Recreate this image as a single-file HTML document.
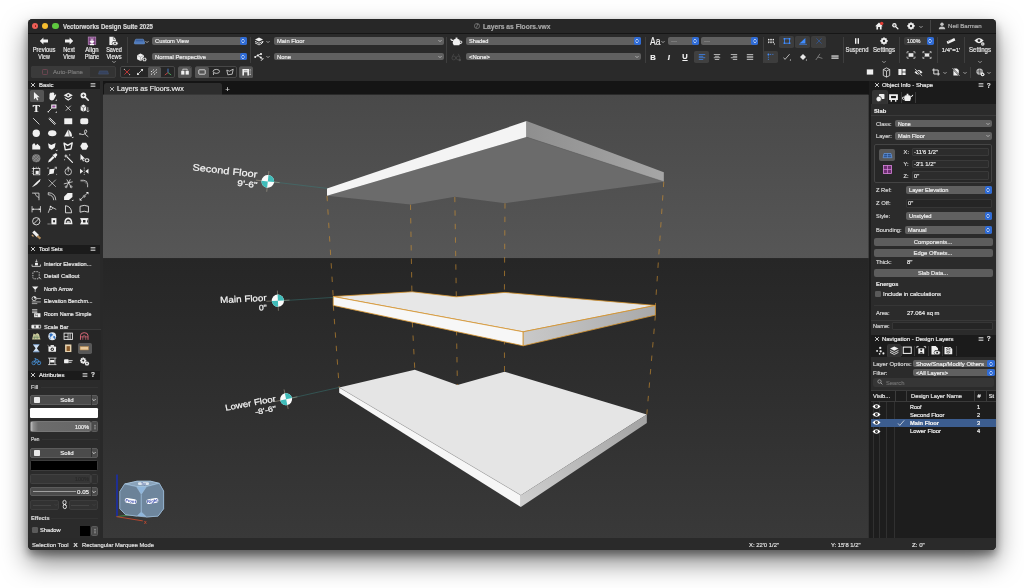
<!DOCTYPE html>
<html lang="en"><head><meta charset="utf-8"><title>Vectorworks Design Suite 2025 - Layers as Floors.vwx</title>
<style>
html,body{margin:0;padding:0;background:#fff;}
body{width:1024px;height:588px;overflow:hidden;position:relative;font-family:"Liberation Sans",sans-serif;}
#page{will-change:transform;position:absolute;left:0;top:0;width:1024px;height:588px;overflow:hidden;}
.a{position:absolute;box-sizing:border-box;}
.t{position:absolute;white-space:nowrap;-webkit-text-stroke:0.18px currentColor;}
svg{overflow:visible;}

</style></head>
<body>
<div id="page">
<div class="a" id="win" style="left:28.2px;top:19.2px;width:967.8px;height:531.3px;border-radius:4.5px;background:#2a2a2a;box-shadow:0 12px 26px rgba(0,0,0,.5),0 5px 9px rgba(0,0,0,.38);overflow:hidden;"></div>
<div class="a" id="winc" style="left:28.2px;top:19.2px;width:967.8px;height:531.3px;border-radius:4.5px;overflow:hidden;">
<div class="a" style="left:-28.2px;top:-19.2px;width:1024px;height:588px;">
<div class="a" style="left:28.00px;top:19.00px;width:968.00px;height:14.50px;background:#272727;"></div>
<div class="a" style="left:28.00px;top:33.30px;width:968.00px;height:0.70px;background:#161616;"></div>
<div class="a" style="left:28.00px;top:34.00px;width:968.00px;height:47.00px;background:#2a2a2a;"></div>
<div class="a" style="left:32.00px;top:23.00px;width:6.40px;height:6.40px;background:#ee5f57;border-radius:3.2px;"></div>
<div class="a" style="left:42.10px;top:23.00px;width:6.40px;height:6.40px;background:#f6be2f;border-radius:3.2px;"></div>
<div class="a" style="left:52.20px;top:23.00px;width:6.40px;height:6.40px;background:#5fc93f;border-radius:3.2px;"></div>
<div class="a" style="left:34.50px;top:25.40px;width:1.60px;height:1.60px;background:#8e1d13;border-radius:0.8px;"></div>
<span id="t1" class="t " style="top:22.96px;font-size:6.4px;line-height:7.68px;color:#dadada;font-weight:700;left:63.00px;transform-origin:0 50%;transform:scaleX(0.9525);">Vectorworks Design Suite 2025</span>
<span id="t2" class="t " style="top:22.96px;font-size:6.4px;line-height:7.68px;color:#a9a9a9;font-weight:700;left:482.50px;transform-origin:0 50%;transform:scaleX(1.0440);">Layers as Floors.vwx</span>
<span id="t3" class="t " style="top:22.08px;font-size:6.2px;line-height:7.44px;color:#b4b4b4;left:948.40px;transform-origin:0 50%;transform:scaleX(0.9869);">Neil Barman</span>
<svg class="a" style="left:39.30px;top:36.40px;" width="10" height="10" viewBox="-5.0 -5.0 10 10"><path d="M-4.2,0 L-0.6,-3.4 L-0.6,-1.4 L4,-1.4 L4,1.4 L-0.6,1.4 L-0.6,3.4 Z" fill="#f0f0f0"/></svg>
<svg class="a" style="left:64.10px;top:36.40px;" width="10" height="10" viewBox="-5.0 -5.0 10 10"><path d="M4.2,0 L0.6,-3.4 L0.6,-1.4 L-4,-1.4 L-4,1.4 L0.6,1.4 L0.6,3.4 Z" fill="#f0f0f0"/></svg>
<svg class="a" style="left:86.50px;top:36.20px;" width="10" height="10" viewBox="-5.0 -5.0 10 10"><rect x="-3.8" y="-4" width="7.6" height="7.6" fill="#7a3f7d" stroke="#c79acb" stroke-width="0.6"/><path d="M-1.2,-4 V3.6 M1.2,-4 V3.6" stroke="#c79acb" stroke-width="0.5"/><path d="M0,-2.4 V1 M-1.9,0.3 L0,2.6 L1.9,0.3 Z" stroke="#fff" stroke-width="1" fill="#fff"/><rect x="-2" y="3" width="4" height="1.2" fill="#fff"/></svg>
<svg class="a" style="left:108.30px;top:36.20px;" width="10" height="10" viewBox="-5.0 -5.0 10 10"><path d="M-3.6,-4.2 H0.6 L3,-1.8 V0 H-0.2 V4 H-3.6 Z" fill="#f0f0f0"/><path d="M0.4,-4 V-1.6 H2.8" fill="none" stroke="#2a2a2a" stroke-width="0.5"/><ellipse cx="2" cy="2.3" rx="3" ry="2" fill="#f0f0f0" stroke="#2a2a2a" stroke-width="0.5"/><circle cx="2" cy="2.3" r="0.9" fill="#2a2a2a"/></svg>
<span id="t4" class="t " style="top:45.90px;font-size:6.5px;line-height:7.80px;color:#ececec;left:44.30px;transform-origin:50% 50%;transform:translateX(-50%) scaleX(0.8934);">Previous</span>
<span id="t5" class="t " style="top:52.90px;font-size:6.5px;line-height:7.80px;color:#ececec;left:44.30px;transform-origin:50% 50%;transform:translateX(-50%) scaleX(0.8223);">View</span>
<span id="t6" class="t " style="top:45.90px;font-size:6.5px;line-height:7.80px;color:#ececec;left:69.10px;transform-origin:50% 50%;transform:translateX(-50%) scaleX(0.8673);">Next</span>
<span id="t7" class="t " style="top:52.90px;font-size:6.5px;line-height:7.80px;color:#ececec;left:69.10px;transform-origin:50% 50%;transform:translateX(-50%) scaleX(0.8223);">View</span>
<span id="t8" class="t " style="top:45.90px;font-size:6.5px;line-height:7.80px;color:#ececec;left:91.50px;transform-origin:50% 50%;transform:translateX(-50%) scaleX(0.9192);">Align</span>
<span id="t9" class="t " style="top:52.90px;font-size:6.5px;line-height:7.80px;color:#ececec;left:91.50px;transform-origin:50% 50%;transform:translateX(-50%) scaleX(0.8782);">Plane</span>
<span id="t10" class="t " style="top:45.90px;font-size:6.5px;line-height:7.80px;color:#ececec;left:113.50px;transform-origin:50% 50%;transform:translateX(-50%) scaleX(0.8461);">Saved</span>
<span id="t11" class="t " style="top:52.90px;font-size:6.5px;line-height:7.80px;color:#ececec;left:113.50px;transform-origin:50% 50%;transform:translateX(-50%) scaleX(0.8820);">Views</span>
<svg class="a" style="left:108.50px;top:57.20px;" width="10" height="10" viewBox="-5.0 -5.0 10 10"><path d="M-1.5,-0.75 L0,0.75 L1.5,-0.75" fill="none" stroke="#bdbdbd" stroke-width="0.7" stroke-linecap="round" stroke-linejoin="round"/></svg>
<div class="a" style="left:127.30px;top:37.00px;width:0.50px;height:26.00px;background:#3e3e3e;"></div>
<svg class="a" style="left:133.70px;top:35.90px;" width="11" height="11" viewBox="-5.5 -5.5 11 11"><path d="M-5.2,1.6 Q-5.4,2.4 -4.6,2.4 H4.6 Q5.4,2.4 5.2,1.6 L4.2,-1.6 Q4,-2.3 3.2,-2.3 H-3.2 Q-4,-2.3 -4.2,-1.6 Z" fill="#3b62a3" stroke="#79a7e6" stroke-width="0.55"/><path d="M-4.6,0.4 H4.6 M-4.9,1.4 H4.9" stroke="#79a7e6" stroke-width="0.4"/></svg>
<svg class="a" style="left:142.00px;top:36.80px;" width="10" height="10" viewBox="-5.0 -5.0 10 10"><path d="M-1.3,-0.65 L0,0.65 L1.3,-0.65" fill="none" stroke="#d8d8d8" stroke-width="0.7" stroke-linecap="round" stroke-linejoin="round"/></svg>
<svg class="a" style="left:135.90px;top:51.50px;" width="11" height="11" viewBox="-5.5 -5.5 11 11"><path d="M-4.4,-2.2 L-1,-4 L2.4,-2.2 V1.8 L-1,3.6 L-4.4,1.8 Z" fill="#f0f0f0"/><path d="M-4.4,-2.2 L-1,-0.4 L2.4,-2.2 M-1,-0.4 V3.6" stroke="#8a8a8a" stroke-width="0.5" fill="none"/><path d="M0.6,2 L1.8,0 H4.2 L5.4,2 L4.2,4 H1.8 Z" fill="#f0f0f0" stroke="#2a2a2a" stroke-width="0.6"/><circle cx="3" cy="2" r="0.9" fill="#2a2a2a"/></svg>
<div class="a" style="left:152.20px;top:37.30px;width:94.40px;height:7.70px;background:#606060;border-radius:2px;"></div>
<div class="a" style="left:239.50px;top:37.30px;width:7.10px;height:7.70px;background:#2f6bd5;border-radius:1.8px;"></div>
<svg class="a" style="left:238.05px;top:36.15px;" width="10" height="10" viewBox="-5.0 -5.0 10 10"><path d="M-1.2,-0.7 L0,-1.9 L1.2,-0.7 M-1.2,0.7 L0,1.9 L1.2,0.7" fill="none" stroke="#fff" stroke-width="0.7" stroke-linecap="round" stroke-linejoin="round"/></svg>
<span id="t12" class="t " style="top:37.08px;font-size:6.2px;line-height:7.44px;color:#f0f0f0;left:155.20px;transform-origin:0 50%;transform:scaleX(0.9355);">Custom View</span>
<div class="a" style="left:152.20px;top:52.80px;width:94.40px;height:7.70px;background:#606060;border-radius:2px;"></div>
<div class="a" style="left:239.50px;top:52.80px;width:7.10px;height:7.70px;background:#2f6bd5;border-radius:1.8px;"></div>
<svg class="a" style="left:238.05px;top:51.65px;" width="10" height="10" viewBox="-5.0 -5.0 10 10"><path d="M-1.2,-0.7 L0,-1.9 L1.2,-0.7 M-1.2,0.7 L0,1.9 L1.2,0.7" fill="none" stroke="#fff" stroke-width="0.7" stroke-linecap="round" stroke-linejoin="round"/></svg>
<span id="t13" class="t " style="top:53.08px;font-size:6.2px;line-height:7.44px;color:#f0f0f0;left:155.20px;transform-origin:0 50%;transform:scaleX(0.9444);">Normal Perspective</span>
<div class="a" style="left:250.00px;top:37.00px;width:0.50px;height:26.00px;background:#3e3e3e;"></div>
<svg class="a" style="left:253.60px;top:36.40px;" width="10" height="10" viewBox="-5.0 -5.0 10 10"><path d="M-4,-1.4 L0,-3.4 L4,-1.4 L0,0.6 Z" fill="#f0f0f0"/><path d="M-4,0.3 L0,2.3 L4,0.3 M-4,1.9 L0,3.9 L1.5,3.2" fill="none" stroke="#f0f0f0" stroke-width="0.8"/><path d="M1.8,3.4 L4.3,0.6" stroke="#f0f0f0" stroke-width="1"/></svg>
<svg class="a" style="left:263.30px;top:36.80px;" width="10" height="10" viewBox="-5.0 -5.0 10 10"><path d="M-1.3,-0.65 L0,0.65 L1.3,-0.65" fill="none" stroke="#cfcfcf" stroke-width="0.7" stroke-linecap="round" stroke-linejoin="round"/></svg>
<svg class="a" style="left:253.60px;top:51.60px;" width="10" height="10" viewBox="-5.0 -5.0 10 10"><path d="M-4,0 L-1.4,-1.6 M-1.4,-1.6 L1.6,-3 M-1.4,-1.6 L1.6,0.4 M1.6,0.4 L3.8,2.6" stroke="#f0f0f0" stroke-width="0.7" fill="none"/><circle cx="-3.8" cy="0" r="1" fill="#f0f0f0"/><circle cx="-1.2" cy="-1.6" r="1" fill="#f0f0f0"/><circle cx="2" cy="-3" r="1.1" fill="#f0f0f0"/><circle cx="1.8" cy="0.5" r="1.1" fill="#f0f0f0"/><path d="M2,3.8 L4.4,1" stroke="#f0f0f0" stroke-width="0.9"/></svg>
<svg class="a" style="left:263.30px;top:52.00px;" width="10" height="10" viewBox="-5.0 -5.0 10 10"><path d="M-1.3,-0.65 L0,0.65 L1.3,-0.65" fill="none" stroke="#cfcfcf" stroke-width="0.7" stroke-linecap="round" stroke-linejoin="round"/></svg>
<div class="a" style="left:273.80px;top:37.20px;width:170.40px;height:7.80px;background:#606060;border-radius:2px;"></div>
<svg class="a" style="left:435.20px;top:36.10px;" width="10" height="10" viewBox="-5.0 -5.0 10 10"><path d="M-1.3,-0.65 L0,0.65 L1.3,-0.65" fill="none" stroke="#d0d0d0" stroke-width="0.7" stroke-linecap="round" stroke-linejoin="round"/></svg>
<span id="t14" class="t " style="top:37.08px;font-size:6.2px;line-height:7.44px;color:#f0f0f0;left:276.80px;transform-origin:0 50%;transform:scaleX(0.9407);">Main Floor</span>
<div class="a" style="left:273.80px;top:52.70px;width:170.40px;height:7.80px;background:#606060;border-radius:2px;"></div>
<svg class="a" style="left:435.20px;top:51.60px;" width="10" height="10" viewBox="-5.0 -5.0 10 10"><path d="M-1.3,-0.65 L0,0.65 L1.3,-0.65" fill="none" stroke="#d0d0d0" stroke-width="0.7" stroke-linecap="round" stroke-linejoin="round"/></svg>
<span id="t15" class="t " style="top:53.08px;font-size:6.2px;line-height:7.44px;color:#f0f0f0;left:276.80px;transform-origin:0 50%;transform:scaleX(0.9461);">None</span>
<div class="a" style="left:446.40px;top:37.00px;width:0.50px;height:26.00px;background:#3e3e3e;"></div>
<svg class="a" style="left:451.10px;top:35.70px;" width="11" height="11" viewBox="-5.0 -5.0 10 10"><g transform="scale(-1.05,1.05)"><path d="M-2.6,-1.6 Q0,-3 2.6,-1.6 Q4,0.8 2.4,3.2 H-2.4 Q-4,0.8 -2.6,-1.6 Z" fill="#f0f0f0"/><rect x="-0.8" y="-3.4" width="1.6" height="1.2" fill="#f0f0f0"/><path d="M2.8,-0.8 Q5,-1 4.8,-2.4" stroke="#f0f0f0" stroke-width="0.9" fill="none"/><path d="M-3,-0.4 Q-5.2,-0.6 -4.6,1.2 Q-4,2 -3,1.8" stroke="#f0f0f0" stroke-width="0.8" fill="none"/></g></svg>
<svg class="a" style="left:451.00px;top:51.80px;" width="10" height="10" viewBox="-5.0 -5.0 10 10"><circle cx="-2.2" cy="1" r="1.9" fill="none" stroke="#4c4c4c" stroke-width="0.7"/><circle cx="2.2" cy="1" r="1.9" fill="none" stroke="#4c4c4c" stroke-width="0.7"/><path d="M-3.6,-0.4 L-2.2,-3.2 M3.6,-0.4 L2.2,-3.2 M-0.4,0.6 H0.4" stroke="#4c4c4c" stroke-width="0.7" fill="none"/><circle cx="3.8" cy="3" r="1.2" fill="#4c4c4c"/></svg>
<div class="a" style="left:466.20px;top:37.10px;width:174.60px;height:7.80px;background:#606060;border-radius:2px;"></div>
<div class="a" style="left:633.60px;top:37.10px;width:7.20px;height:7.80px;background:#2f6bd5;border-radius:1.8px;"></div>
<svg class="a" style="left:632.20px;top:36.00px;" width="10" height="10" viewBox="-5.0 -5.0 10 10"><path d="M-1.2,-0.7 L0,-1.9 L1.2,-0.7 M-1.2,0.7 L0,1.9 L1.2,0.7" fill="none" stroke="#fff" stroke-width="0.7" stroke-linecap="round" stroke-linejoin="round"/></svg>
<span id="t16" class="t " style="top:37.08px;font-size:6.2px;line-height:7.44px;color:#f0f0f0;left:469.20px;transform-origin:0 50%;transform:scaleX(0.9136);">Shaded</span>
<div class="a" style="left:466.20px;top:52.70px;width:174.60px;height:7.80px;background:#606060;border-radius:2px;"></div>
<svg class="a" style="left:631.80px;top:51.60px;" width="10" height="10" viewBox="-5.0 -5.0 10 10"><path d="M-1.3,-0.65 L0,0.65 L1.3,-0.65" fill="none" stroke="#d0d0d0" stroke-width="0.7" stroke-linecap="round" stroke-linejoin="round"/></svg>
<span id="t17" class="t " style="top:53.08px;font-size:6.2px;line-height:7.44px;color:#f0f0f0;left:469.20px;transform-origin:0 50%;transform:scaleX(0.9532);">&lt;None&gt;</span>
<div class="a" style="left:644.50px;top:37.00px;width:0.50px;height:26.00px;background:#3e3e3e;"></div>
<span id="t18" class="t " style="top:35.80px;font-size:10px;line-height:12.00px;color:#f0f0f0;left:649.60px;transform-origin:0 50%;transform:scaleX(0.8501);">Aa</span>
<svg class="a" style="left:657.60px;top:36.80px;" width="10" height="10" viewBox="-5.0 -5.0 10 10"><path d="M-1.3,-0.65 L0,0.65 L1.3,-0.65" fill="none" stroke="#cfcfcf" stroke-width="0.7" stroke-linecap="round" stroke-linejoin="round"/></svg>
<div class="a" style="left:668.00px;top:37.40px;width:30.60px;height:7.60px;background:#606060;border-radius:2px;"></div>
<div class="a" style="left:691.60px;top:37.40px;width:7.00px;height:7.60px;background:#2f6bd5;border-radius:1.8px;"></div>
<svg class="a" style="left:690.10px;top:36.20px;" width="10" height="10" viewBox="-5.0 -5.0 10 10"><path d="M-1.2,-0.7 L0,-1.9 L1.2,-0.7 M-1.2,0.7 L0,1.9 L1.2,0.7" fill="none" stroke="#fff" stroke-width="0.7" stroke-linecap="round" stroke-linejoin="round"/></svg>
<span id="t19" class="t " style="top:37.08px;font-size:6.2px;line-height:7.44px;color:#9a9a9a;left:671.00px;">---</span>
<div class="a" style="left:701.00px;top:37.40px;width:57.20px;height:7.60px;background:#606060;border-radius:2px;"></div>
<div class="a" style="left:751.20px;top:37.40px;width:7.00px;height:7.60px;background:#2f6bd5;border-radius:1.8px;"></div>
<svg class="a" style="left:749.70px;top:36.20px;" width="10" height="10" viewBox="-5.0 -5.0 10 10"><path d="M-1.2,-0.7 L0,-1.9 L1.2,-0.7 M-1.2,0.7 L0,1.9 L1.2,0.7" fill="none" stroke="#fff" stroke-width="0.7" stroke-linecap="round" stroke-linejoin="round"/></svg>
<span id="t20" class="t " style="top:37.08px;font-size:6.2px;line-height:7.44px;color:#9a9a9a;left:704.00px;">---</span>
<span id="t21" class="t " style="top:53.24px;font-size:7.6px;line-height:9.12px;color:#f2f2f2;font-weight:700;left:653.00px;transform-origin:50% 50%;transform:translateX(-50%);">B</span>
<span id="t22" class="t " style="top:53.24px;font-size:7.6px;line-height:9.12px;color:#f2f2f2;left:668.90px;transform-origin:50% 50%;transform:translateX(-50%);font-style:italic;font-weight:700;">I</span>
<span id="t23" class="t " style="top:53.36px;font-size:7.4px;line-height:8.88px;color:#f2f2f2;font-weight:700;left:685.00px;transform-origin:50% 50%;transform:translateX(-50%);text-decoration:underline;">U</span>
<div class="a" style="left:694.40px;top:51.30px;width:14.40px;height:11.60px;background:#404040;border-radius:1.8px;"></div>
<svg class="a" style="left:697.30px;top:52.00px;" width="10" height="10" viewBox="-5.0 -5.0 10 10"><rect x="-3.2" y="-2.75" width="6.4" height="0.7" fill="#3f8cff"/><rect x="-3.2" y="-1.15" width="4.4" height="0.7" fill="#3f8cff"/><rect x="-3.2" y="0.4500000000000003" width="6.4" height="0.7" fill="#3f8cff"/><rect x="-3.2" y="2.0500000000000007" width="4.4" height="0.7" fill="#3f8cff"/></svg>
<svg class="a" style="left:712.30px;top:52.00px;" width="10" height="10" viewBox="-5.0 -5.0 10 10"><rect x="-3.2" y="-2.75" width="6.4" height="0.7" fill="#e8e8e8"/><rect x="-2.2" y="-1.15" width="4.4" height="0.7" fill="#e8e8e8"/><rect x="-3.2" y="0.4500000000000003" width="6.4" height="0.7" fill="#e8e8e8"/><rect x="-2.2" y="2.0500000000000007" width="4.4" height="0.7" fill="#e8e8e8"/></svg>
<svg class="a" style="left:728.60px;top:52.00px;" width="10" height="10" viewBox="-5.0 -5.0 10 10"><rect x="-3.2" y="-2.75" width="6.4" height="0.7" fill="#e8e8e8"/><rect x="-1.2000000000000002" y="-1.15" width="4.4" height="0.7" fill="#e8e8e8"/><rect x="-3.2" y="0.4500000000000003" width="6.4" height="0.7" fill="#e8e8e8"/><rect x="-1.2000000000000002" y="2.0500000000000007" width="4.4" height="0.7" fill="#e8e8e8"/></svg>
<svg class="a" style="left:745.00px;top:52.00px;" width="10" height="10" viewBox="-5.0 -5.0 10 10"><rect x="-3.2" y="-2.75" width="6.4" height="0.7" fill="#e8e8e8"/><rect x="-3.2" y="-1.15" width="6.4" height="0.7" fill="#e8e8e8"/><rect x="-3.2" y="0.4500000000000003" width="6.4" height="0.7" fill="#e8e8e8"/><rect x="-3.2" y="2.0500000000000007" width="6.4" height="0.7" fill="#e8e8e8"/></svg>
<div class="a" style="left:762.50px;top:37.00px;width:0.50px;height:26.00px;background:#3e3e3e;"></div>
<svg class="a" style="left:765.50px;top:36.40px;" width="10" height="10" viewBox="-5.0 -5.0 10 10"><circle cx="-2.4" cy="-1.6" r="0.6" fill="#f4f4f4"/><circle cx="-2.4" cy="0.0" r="0.6" fill="#f4f4f4"/><circle cx="-2.4" cy="1.6" r="0.6" fill="#f4f4f4"/><circle cx="-0.7999999999999998" cy="-1.6" r="0.6" fill="#f4f4f4"/><circle cx="-0.7999999999999998" cy="0.0" r="0.6" fill="#f4f4f4"/><circle cx="-0.7999999999999998" cy="1.6" r="0.6" fill="#f4f4f4"/><circle cx="0.8000000000000003" cy="-1.6" r="0.6" fill="#f4f4f4"/><circle cx="0.8000000000000003" cy="0.0" r="0.6" fill="#f4f4f4"/><circle cx="0.8000000000000003" cy="1.6" r="0.6" fill="#f4f4f4"/><circle cx="2.400000000000001" cy="-1.6" r="0.6" fill="#f4f4f4"/><circle cx="2.400000000000001" cy="0.0" r="0.6" fill="#f4f4f4"/><circle cx="2.400000000000001" cy="1.6" r="0.6" fill="#f4f4f4"/><path d="M2.6,3.4 L4,2 V3.4 Z" fill="#e8e8e8"/></svg>
<div class="a" style="left:779.00px;top:36.10px;width:15.00px;height:11.60px;background:#3d3d3d;border-radius:1.8px;"></div>
<div class="a" style="left:795.00px;top:36.10px;width:15.00px;height:11.60px;background:#3d3d3d;border-radius:1.8px;"></div>
<div class="a" style="left:811.00px;top:36.10px;width:15.00px;height:11.60px;background:#3d3d3d;border-radius:1.8px;"></div>
<svg class="a" style="left:781.50px;top:36.30px;" width="10" height="10" viewBox="-5.0 -5.0 10 10"><rect x="-2.6" y="-2.2" width="5.2" height="4.4" fill="none" stroke="#3f8cff" stroke-width="0.8"/><rect x="-3.4" y="-3" width="1.6" height="1.6" fill="#3f8cff"/><rect x="1.8" y="-3" width="1.6" height="1.6" fill="#3f8cff"/><rect x="-3.4" y="1.4" width="1.6" height="1.6" fill="#3f8cff"/><rect x="1.8" y="1.4" width="1.6" height="1.6" fill="#3f8cff"/></svg>
<svg class="a" style="left:797.50px;top:36.30px;" width="10" height="10" viewBox="-5.0 -5.0 10 10"><path d="M-3.6,2.6 L2.4,-3 V2.6 Z" fill="#3f8cff"/><path d="M-3.8,3.4 H4" stroke="#3f8cff" stroke-width="0.6"/></svg>
<svg class="a" style="left:813.50px;top:36.30px;" width="10" height="10" viewBox="-5.0 -5.0 10 10"><path d="M-2.6,-2.6 L2.6,2.6 M2.6,-2.6 L-2.6,2.6" stroke="#2f5da8" stroke-width="0.7"/></svg>
<div class="a" style="left:763.00px;top:51.30px;width:15.00px;height:11.60px;background:#3d3d3d;border-radius:1.8px;"></div>
<svg class="a" style="left:765.50px;top:52.00px;" width="10" height="10" viewBox="-5.0 -5.0 10 10"><path d="M-2.6,3 V-2.6 H3" fill="none" stroke="#3f8cff" stroke-width="0.7" stroke-dasharray="1 0.8"/><circle cx="-2.6" cy="-2.6" r="0.9" fill="#3f8cff"/></svg>
<svg class="a" style="left:781.50px;top:52.00px;" width="10" height="10" viewBox="-5.0 -5.0 10 10"><path d="M-3.4,0.6 L-2,2.4 L2.6,-2.8" fill="none" stroke="#d8d8d8" stroke-width="0.8"/><path d="M2.6,3.4 L4,2 V3.4 Z" fill="#d8d8d8"/></svg>
<svg class="a" style="left:797.50px;top:52.00px;" width="10" height="10" viewBox="-5.0 -5.0 10 10"><path d="M-3,0 L0,-3 L3,0 L0,3 Z" fill="#e8e8e8"/><path d="M2.6,3.4 L4,2 V3.4 Z" fill="#d8d8d8"/></svg>
<svg class="a" style="left:813.50px;top:52.00px;" width="10" height="10" viewBox="-5.0 -5.0 10 10"><path d="M-3.2,3 L1,-3.2 M-1,0 L3.4,1.4" stroke="#9a9a9a" stroke-width="0.7"/></svg>
<svg class="a" style="left:829.50px;top:52.20px;" width="10" height="10" viewBox="-5.0 -5.0 10 10"><rect x="-3.6" y="-1.6" width="7.2" height="1.3" fill="#d8d8d8"/><rect x="-3.6" y="0.5" width="7.2" height="1.3" fill="#d8d8d8"/></svg>
<div class="a" style="left:843.00px;top:37.00px;width:0.50px;height:26.00px;background:#3e3e3e;"></div>
<svg class="a" style="left:851.50px;top:36.30px;" width="10" height="10" viewBox="-5.0 -5.0 10 10"><rect x="-2" y="-2.8" width="1.4" height="5.6" fill="#f0f0f0"/><rect x="0.6" y="-2.8" width="1.4" height="5.6" fill="#f0f0f0"/></svg>
<span id="t24" class="t " style="top:45.96px;font-size:6.4px;line-height:7.68px;color:#e8e8e8;left:856.50px;transform-origin:50% 50%;transform:translateX(-50%) scaleX(0.9115);">Suspend</span>
<svg class="a" style="left:878.50px;top:36.20px;" width="10" height="10" viewBox="-5.0 -5.0 10 10"><g transform="translate(0,0)"><circle r="2.48" fill="#f0f0f0"/><rect x="-0.93" y="-3.53" width="1.86" height="1.86" rx="0.19" fill="#f0f0f0" transform="rotate(0)"/><rect x="-0.93" y="-3.53" width="1.86" height="1.86" rx="0.19" fill="#f0f0f0" transform="rotate(45)"/><rect x="-0.93" y="-3.53" width="1.86" height="1.86" rx="0.19" fill="#f0f0f0" transform="rotate(90)"/><rect x="-0.93" y="-3.53" width="1.86" height="1.86" rx="0.19" fill="#f0f0f0" transform="rotate(135)"/><rect x="-0.93" y="-3.53" width="1.86" height="1.86" rx="0.19" fill="#f0f0f0" transform="rotate(180)"/><rect x="-0.93" y="-3.53" width="1.86" height="1.86" rx="0.19" fill="#f0f0f0" transform="rotate(225)"/><rect x="-0.93" y="-3.53" width="1.86" height="1.86" rx="0.19" fill="#f0f0f0" transform="rotate(270)"/><rect x="-0.93" y="-3.53" width="1.86" height="1.86" rx="0.19" fill="#f0f0f0" transform="rotate(315)"/><circle r="1.18" fill="#2a2a2a"/></g></svg>
<span id="t25" class="t " style="top:45.96px;font-size:6.4px;line-height:7.68px;color:#e8e8e8;left:883.50px;transform-origin:50% 50%;transform:translateX(-50%) scaleX(0.9526);">Settings</span>
<svg class="a" style="left:878.50px;top:57.20px;" width="10" height="10" viewBox="-5.0 -5.0 10 10"><path d="M-1.5,-0.75 L0,0.75 L1.5,-0.75" fill="none" stroke="#bdbdbd" stroke-width="0.7" stroke-linecap="round" stroke-linejoin="round"/></svg>
<div class="a" style="left:899.00px;top:37.00px;width:0.50px;height:26.00px;background:#3e3e3e;"></div>
<div class="a" style="left:903.50px;top:37.00px;width:30.30px;height:7.80px;background:#3c3c3c;border-radius:2px;"></div>
<div class="a" style="left:926.60px;top:37.00px;width:7.20px;height:7.80px;background:#2f6bd5;border-radius:1.8px;"></div>
<svg class="a" style="left:925.20px;top:35.90px;" width="10" height="10" viewBox="-5.0 -5.0 10 10"><path d="M-1.2,-0.7 L0,-1.9 L1.2,-0.7 M-1.2,0.7 L0,1.9 L1.2,0.7" fill="none" stroke="#fff" stroke-width="0.7" stroke-linecap="round" stroke-linejoin="round"/></svg>
<span id="t26" class="t " style="top:37.08px;font-size:6.2px;line-height:7.44px;color:#f0f0f0;left:906.90px;transform-origin:0 50%;transform:scaleX(0.8529);">100%</span>
<svg class="a" style="left:905.50px;top:50.20px;" width="10" height="10" viewBox="-5.0 -5.0 10 10"><rect x="-2.4" y="-1.8" width="4.8" height="3.6" fill="#e8e8e8"/><path d="M-4,-1.6 V-3.2 H-2.2 M4,-1.6 V-3.2 H2.2 M-4,1.6 V3.2 H-2.2 M4,1.6 V3.2 H2.2" fill="none" stroke="#e8e8e8" stroke-width="0.7"/></svg>
<svg class="a" style="left:921.50px;top:50.20px;" width="10" height="10" viewBox="-5.0 -5.0 10 10"><rect x="-2.2" y="-1.6" width="4.4" height="3.2" fill="#e8e8e8"/><path d="M-4,-3.2 L-2.4,-1.8 M4,-3.2 L2.4,-1.8 M-4,3.2 L-2.4,1.8 M4,3.2 L2.4,1.8 M-4.2,-1.8 V-3.4 H-2.6 M4.2,-1.8 V-3.4 H2.6 M-4.2,1.8 V3.4 H-2.6 M4.2,1.8 V3.4 H2.6" fill="none" stroke="#e8e8e8" stroke-width="0.6"/></svg>
<div class="a" style="left:937.20px;top:37.00px;width:0.50px;height:26.00px;background:#3e3e3e;"></div>
<svg class="a" style="left:946.00px;top:36.20px;" width="10" height="10" viewBox="-5.0 -5.0 10 10"><rect x="-4.2" y="-1.3" width="8.4" height="2.6" fill="#f0f0f0" transform="rotate(-24)"/><path d="M-2.4,0.2 V-1 M-0.8,-0.5 V-1.7 M0.8,-1.2 V-2.4" stroke="#2a2a2a" stroke-width="0.5" transform="rotate(-24)"/></svg>
<span id="t27" class="t " style="top:46.70px;font-size:6.0px;line-height:7.20px;color:#e8e8e8;left:951.00px;transform-origin:50% 50%;transform:translateX(-50%) scaleX(1.0017);">1/4"=1'</span>
<div class="a" style="left:964.00px;top:37.00px;width:0.50px;height:26.00px;background:#3e3e3e;"></div>
<svg class="a" style="left:974.00px;top:35.80px;" width="10" height="10" viewBox="-5.0 -5.0 10 10"><path d="M-4.6,-0.4 Q0,-5.6 4.6,-0.4 Q0,4.8 -4.6,-0.4 Z" fill="#f0f0f0"/><circle cx="0" cy="-0.4" r="1.35" fill="#2a2a2a"/><g transform="translate(3.8,3)"><circle r="1.20" fill="#f0f0f0"/><rect x="-0.45" y="-1.71" width="0.90" height="0.90" rx="0.09" fill="#f0f0f0" transform="rotate(0)"/><rect x="-0.45" y="-1.71" width="0.90" height="0.90" rx="0.09" fill="#f0f0f0" transform="rotate(45)"/><rect x="-0.45" y="-1.71" width="0.90" height="0.90" rx="0.09" fill="#f0f0f0" transform="rotate(90)"/><rect x="-0.45" y="-1.71" width="0.90" height="0.90" rx="0.09" fill="#f0f0f0" transform="rotate(135)"/><rect x="-0.45" y="-1.71" width="0.90" height="0.90" rx="0.09" fill="#f0f0f0" transform="rotate(180)"/><rect x="-0.45" y="-1.71" width="0.90" height="0.90" rx="0.09" fill="#f0f0f0" transform="rotate(225)"/><rect x="-0.45" y="-1.71" width="0.90" height="0.90" rx="0.09" fill="#f0f0f0" transform="rotate(270)"/><rect x="-0.45" y="-1.71" width="0.90" height="0.90" rx="0.09" fill="#f0f0f0" transform="rotate(315)"/><circle r="0.57" fill="#2a2a2a"/></g></svg>
<span id="t28" class="t " style="top:45.96px;font-size:6.4px;line-height:7.68px;color:#e8e8e8;left:979.50px;transform-origin:50% 50%;transform:translateX(-50%) scaleX(0.9526);">Settings</span>
<svg class="a" style="left:974.50px;top:57.20px;" width="10" height="10" viewBox="-5.0 -5.0 10 10"><path d="M-1.5,-0.75 L0,0.75 L1.5,-0.75" fill="none" stroke="#bdbdbd" stroke-width="0.7" stroke-linecap="round" stroke-linejoin="round"/></svg>
<svg class="a" style="left:873.80px;top:21.20px;" width="10" height="10" viewBox="-5.0 -5.0 10 10"><path d="M-3.8,0.2 L0,-3.4 L3.8,0.2 H2.6 V3.4 H0.9 V1 H-0.9 V3.4 H-2.6 V0.2 Z" fill="#f0f0f0"/><circle cx="2.7" cy="-2.6" r="1.7" fill="#e33d35"/></svg>
<svg class="a" style="left:890.00px;top:21.30px;" width="10" height="10" viewBox="-5.0 -5.0 10 10"><circle cx="-0.6" cy="-0.7" r="2.2" fill="#f0f0f0"/><circle cx="-0.6" cy="-0.7" r="1.1" fill="#6a6a6a"/><path d="M1,0.9 L2.9,2.8" stroke="#f0f0f0" stroke-width="1.3" stroke-linecap="round"/></svg>
<svg class="a" style="left:905.80px;top:21.20px;" width="10" height="10" viewBox="-5.0 -5.0 10 10"><g transform="translate(0,0)"><circle r="2.48" fill="#f0f0f0"/><rect x="-0.93" y="-3.53" width="1.86" height="1.86" rx="0.19" fill="#f0f0f0" transform="rotate(0)"/><rect x="-0.93" y="-3.53" width="1.86" height="1.86" rx="0.19" fill="#f0f0f0" transform="rotate(45)"/><rect x="-0.93" y="-3.53" width="1.86" height="1.86" rx="0.19" fill="#f0f0f0" transform="rotate(90)"/><rect x="-0.93" y="-3.53" width="1.86" height="1.86" rx="0.19" fill="#f0f0f0" transform="rotate(135)"/><rect x="-0.93" y="-3.53" width="1.86" height="1.86" rx="0.19" fill="#f0f0f0" transform="rotate(180)"/><rect x="-0.93" y="-3.53" width="1.86" height="1.86" rx="0.19" fill="#f0f0f0" transform="rotate(225)"/><rect x="-0.93" y="-3.53" width="1.86" height="1.86" rx="0.19" fill="#f0f0f0" transform="rotate(270)"/><rect x="-0.93" y="-3.53" width="1.86" height="1.86" rx="0.19" fill="#f0f0f0" transform="rotate(315)"/><circle r="1.18" fill="#272727"/></g></svg>
<svg class="a" style="left:915.80px;top:21.60px;" width="10" height="10" viewBox="-5.0 -5.0 10 10"><path d="M-1.3,-0.65 L0,0.65 L1.3,-0.65" fill="none" stroke="#cfcfcf" stroke-width="0.7" stroke-linecap="round" stroke-linejoin="round"/></svg>
<div class="a" style="left:930.40px;top:19.50px;width:0.60px;height:13.80px;background:#444;"></div>
<svg class="a" style="left:937.20px;top:21.00px;" width="10" height="10" viewBox="-5.0 -5.0 10 10"><circle cx="0" cy="-1.7" r="1.7" fill="#c4c4c4"/><path d="M-3.2,3.2 Q-3.2,0.5 0,0.5 Q3.2,0.5 3.2,3.2 Z" fill="#c4c4c4"/></svg>
<svg class="a" style="left:471.80px;top:21.20px;" width="10" height="10" viewBox="-5.0 -5.0 10 10"><circle r="2.6" fill="none" stroke="#8a8a8a" stroke-width="0.6"/><path d="M-1,2 L1,-2 M-0.4,-1.6 H1.4" stroke="#8a8a8a" stroke-width="0.6" fill="none"/></svg>
<div class="a" style="left:31.00px;top:66.40px;width:85.30px;height:11.60px;background:#333333;border-radius:2px;border:0.5px solid #3d3d3d;"></div>
<div class="a" style="left:31.00px;top:66.40px;width:58.60px;height:11.60px;background:#3a3a3a;border-radius:2px 0 0 2px;"></div>
<div class="a" style="left:42.00px;top:69.00px;width:6.40px;height:6.40px;border-radius:1.2px;border:0.6px solid #6a4550;"></div>
<span id="t29" class="t " style="top:68.08px;font-size:6.2px;line-height:7.44px;color:#7a7a7a;left:53.00px;transform-origin:0 50%;transform:scaleX(0.9768);">Auto-Plane</span>
<svg class="a" style="left:97.80px;top:67.10px;" width="11" height="11" viewBox="-5.5 -5.5 11 11"><path d="M-5,1.6 L-4,-1.6 H4 L5,1.6 Z" fill="#36425c" stroke="#47587a" stroke-width="0.5"/></svg>
<div class="a" style="left:119.60px;top:66.20px;width:55.40px;height:11.60px;background:#262626;border-radius:2px;border:0.5px solid #474747;"></div>
<div class="a" style="left:147.60px;top:66.50px;width:13.25px;height:11.00px;background:#555555;border-radius:1.5px;"></div>
<svg class="a" style="left:121.52px;top:67.10px;" width="10" height="10" viewBox="-5.0 -5.0 10 10"><path d="M-2.6,-2.6 L2.6,2.6 M2.6,-2.6 L-2.6,2.6" stroke="#d83a3a" stroke-width="0.8"/><circle cx="-2.6" cy="-2.6" r="0.6" fill="#bbb"/><circle cx="2.6" cy="2.6" r="0.6" fill="#bbb"/></svg>
<svg class="a" style="left:135.38px;top:67.10px;" width="10" height="10" viewBox="-5.0 -5.0 10 10"><path d="M-2.4,2.4 L2.4,-2.4" stroke="#e8e8e8" stroke-width="0.8"/><path d="M0.6,-3 H3 V-0.6 Z M-0.6,3 H-3 V0.6 Z" fill="#e8e8e8"/></svg>
<svg class="a" style="left:149.22px;top:67.10px;" width="10" height="10" viewBox="-5.0 -5.0 10 10"><path d="M-3,2.6 L3,-2.6 M-3,0 L0,-2.6 M0,2.6 L3,0" stroke="#f0f0f0" stroke-width="1" stroke-dasharray="1.3 1"/></svg>
<svg class="a" style="left:163.07px;top:67.10px;" width="10" height="10" viewBox="-5.0 -5.0 10 10"><path d="M0,0.6 V-3.4" stroke="#4f8df0" stroke-width="0.8"/><path d="M0,0.6 L-3.2,3" stroke="#e04a4a" stroke-width="0.8"/><path d="M0,0.6 L3.2,3" stroke="#4fc06a" stroke-width="0.8"/></svg>
<div class="a" style="left:177.60px;top:66.20px;width:14.20px;height:11.60px;background:#262626;border-radius:2px;border:0.5px solid #474747;"></div>
<div class="a" style="left:177.90px;top:66.50px;width:13.60px;height:11.00px;background:#555555;border-radius:1.5px;"></div>
<svg class="a" style="left:179.70px;top:67.40px;" width="10" height="10" viewBox="-5.0 -5.0 10 10"><rect x="-3.8" y="-1.2" width="3.2" height="3.8" fill="#f0f0f0"/><rect x="0.6" y="-1.2" width="3.2" height="3.8" fill="#f0f0f0"/><path d="M-2.2,-1.4 V-2.8 H2.2 V-1.4" fill="none" stroke="#f0f0f0" stroke-width="0.7"/></svg>
<div class="a" style="left:195.00px;top:66.20px;width:41.80px;height:11.60px;background:#262626;border-radius:2px;border:0.5px solid #474747;"></div>
<div class="a" style="left:195.30px;top:66.50px;width:13.33px;height:11.00px;background:#555555;border-radius:1.5px;"></div>
<svg class="a" style="left:196.97px;top:67.10px;" width="10" height="10" viewBox="-5.0 -5.0 10 10"><rect x="-3.2" y="-2.2" width="6.4" height="4.4" rx="0.6" fill="none" stroke="#f0f0f0" stroke-width="0.8"/></svg>
<svg class="a" style="left:210.90px;top:67.10px;" width="10" height="10" viewBox="-5.0 -5.0 10 10"><ellipse cx="0.3" cy="-0.6" rx="3.2" ry="2" fill="none" stroke="#f0f0f0" stroke-width="0.7"/><path d="M-2.2,0.8 Q-3.4,2 -2.2,3" fill="none" stroke="#f0f0f0" stroke-width="0.7"/></svg>
<svg class="a" style="left:224.83px;top:67.10px;" width="10" height="10" viewBox="-5.0 -5.0 10 10"><path d="M-3.2,-2 L-0.6,-0.8 L3.2,-2.8 L2.2,2.2 L-2.2,2.8 Z" fill="none" stroke="#f0f0f0" stroke-width="0.7" stroke-linejoin="round"/></svg>
<div class="a" style="left:238.80px;top:66.20px;width:14.20px;height:11.60px;background:#262626;border-radius:2px;border:0.5px solid #474747;"></div>
<div class="a" style="left:239.10px;top:66.50px;width:13.60px;height:11.00px;background:#555555;border-radius:1.5px;"></div>
<svg class="a" style="left:240.90px;top:67.30px;" width="10" height="10" viewBox="-5.0 -5.0 10 10"><path d="M-3.6,3.4 V-3 H3 V3.4 H1.4 V0.2 H-2 V3.4 Z" fill="#f0f0f0"/><path d="M-2,-1.2 H1.4" stroke="#555" stroke-width="0.6"/><path d="M4.2,-2.4 V2.8 M3.6,-1.6 L4.2,-2.6 L4.8,-1.6 M3.6,2 L4.2,3 L4.8,2" stroke="#f0f0f0" stroke-width="0.4" fill="none"/></svg>
<svg class="a" style="left:865.00px;top:67.20px;" width="10" height="10" viewBox="-5.0 -5.0 10 10"><rect x="-3.2" y="-2.6" width="6.4" height="5.2" fill="#f0f0f0"/></svg>
<svg class="a" style="left:880.90px;top:66.70px;" width="11" height="11" viewBox="-5.5 -5.5 11 11"><path d="M-3.2,-3 L0,-4.6 L3.2,-3 V3 L0,4.6 L-3.2,3 Z M-3.2,-3 L0,-1.4 L3.2,-3 M0,-1.4 V4.6" fill="none" stroke="#f0f0f0" stroke-width="0.75" stroke-linejoin="round"/></svg>
<svg class="a" style="left:896.50px;top:67.20px;" width="10" height="10" viewBox="-5.0 -5.0 10 10"><rect x="-3.6" y="-3" width="3.2" height="6" fill="#f0f0f0"/><rect x="0.4" y="-3" width="3.2" height="2.6" fill="#f0f0f0"/><rect x="0.4" y="0.4" width="3.2" height="2.6" fill="#f0f0f0"/></svg>
<svg class="a" style="left:913.10px;top:66.70px;" width="11" height="11" viewBox="-5.5 -5.5 11 11"><path d="M-4,-0.2 Q0,-4.6 4,-0.2 Q0,4.2 -4,-0.2 Z" fill="#f0f0f0"/><circle cy="-0.2" r="1.3" fill="#2a2a2a"/><path d="M-3.6,-3.6 L3.6,3.4" stroke="#2a2a2a" stroke-width="1.5"/><path d="M-3.6,-3.6 L3.6,3.4" stroke="#f0f0f0" stroke-width="0.7"/></svg>
<svg class="a" style="left:931.00px;top:67.20px;" width="10" height="10" viewBox="-5.0 -5.0 10 10"><path d="M-2.2,-3.6 V2 H3.8 M-3.8,-2 H2.2 V3.6" fill="none" stroke="#f0f0f0" stroke-width="0.9"/></svg>
<svg class="a" style="left:940.00px;top:67.80px;" width="10" height="10" viewBox="-5.0 -5.0 10 10"><path d="M-1.3,-0.65 L0,0.65 L1.3,-0.65" fill="none" stroke="#cfcfcf" stroke-width="0.7" stroke-linecap="round" stroke-linejoin="round"/></svg>
<svg class="a" style="left:951.00px;top:67.20px;" width="10" height="10" viewBox="-5.0 -5.0 10 10"><path d="M-2.6,-3.6 H1 L2.8,-1.8 V3.6 H-2.6 Z" fill="#f0f0f0"/><path d="M-3.6,-3.8 L3.6,3.8" stroke="#2a2a2a" stroke-width="1.3"/><path d="M-3.6,-3.8 L3.6,3.8" stroke="#f0f0f0" stroke-width="0.6"/></svg>
<svg class="a" style="left:960.00px;top:67.80px;" width="10" height="10" viewBox="-5.0 -5.0 10 10"><path d="M-1.3,-0.65 L0,0.65 L1.3,-0.65" fill="none" stroke="#cfcfcf" stroke-width="0.7" stroke-linecap="round" stroke-linejoin="round"/></svg>
<div class="a" style="left:970.30px;top:67.00px;width:0.50px;height:11.00px;background:#3e3e3e;"></div>
<svg class="a" style="left:975.40px;top:67.00px;" width="10" height="10" viewBox="-5.0 -5.0 10 10"><circle cx="-0.4" cy="-0.4" r="3.2" fill="#cfcfcf"/><path d="M-3.4,-0.6 H2.6 M-0.4,-3.6 V2.8 M-2.8,-2 Q-0.4,-0.8 2,-2 M-2.8,1.2 Q-0.4,0 2,1.2" stroke="#2a2a2a" stroke-width="0.45" fill="none"/><g transform="translate(2.6,2.4)"><circle r="1.36" fill="#f0f0f0"/><rect x="-0.51" y="-1.94" width="1.02" height="1.02" rx="0.10" fill="#f0f0f0" transform="rotate(0)"/><rect x="-0.51" y="-1.94" width="1.02" height="1.02" rx="0.10" fill="#f0f0f0" transform="rotate(45)"/><rect x="-0.51" y="-1.94" width="1.02" height="1.02" rx="0.10" fill="#f0f0f0" transform="rotate(90)"/><rect x="-0.51" y="-1.94" width="1.02" height="1.02" rx="0.10" fill="#f0f0f0" transform="rotate(135)"/><rect x="-0.51" y="-1.94" width="1.02" height="1.02" rx="0.10" fill="#f0f0f0" transform="rotate(180)"/><rect x="-0.51" y="-1.94" width="1.02" height="1.02" rx="0.10" fill="#f0f0f0" transform="rotate(225)"/><rect x="-0.51" y="-1.94" width="1.02" height="1.02" rx="0.10" fill="#f0f0f0" transform="rotate(270)"/><rect x="-0.51" y="-1.94" width="1.02" height="1.02" rx="0.10" fill="#f0f0f0" transform="rotate(315)"/><circle r="0.65" fill="#2a2a2a"/></g></svg>
<svg class="a" style="left:984.20px;top:67.80px;" width="10" height="10" viewBox="-5.0 -5.0 10 10"><path d="M-1.3,-0.65 L0,0.65 L1.3,-0.65" fill="none" stroke="#cfcfcf" stroke-width="0.7" stroke-linecap="round" stroke-linejoin="round"/></svg>
<div class="a" style="left:28.00px;top:81.00px;width:72.20px;height:457.00px;background:#2b2b2b;"></div>
<div class="a" style="left:100.20px;top:81.00px;width:2.80px;height:457.00px;background:#292929;"></div>
<div class="a" style="left:28.00px;top:80.90px;width:72.20px;height:8.60px;background:#1b1b1b;"></div>
<svg class="a" style="left:28.20px;top:80.20px;" width="10" height="10" viewBox="-5.0 -5.0 10 10"><path d="M-1.9,-1.9 L1.9,1.9 M1.9,-1.9 L-1.9,1.9" stroke="#f0f0f0" stroke-width="0.85"/></svg>
<span id="t30" class="t " style="top:81.14px;font-size:6.1px;line-height:7.32px;color:#f0f0f0;left:39.00px;transform-origin:0 50%;transform:scaleX(0.9727);">Basic</span>
<svg class="a" style="left:88.00px;top:80.20px;" width="10" height="10" viewBox="-5.0 -5.0 10 10"><path d="M-2.4,-1.5 H2.4 M-2.4,0 H2.4 M-2.4,1.5 H2.4" stroke="#d8d8d8" stroke-width="0.75"/></svg>
<div class="a" style="left:29.60px;top:89.80px;width:14.00px;height:11.80px;background:#555555;border-radius:1.5px;"></div>
<svg class="a" style="left:31.05px;top:90.55px;" width="10.5" height="10.5" viewBox="-5.0 -5.0 10 10"><path d="M-2.2,-4 L-2.2,3 L-0.4,1.4 L0.8,4 L2,3.4 L0.8,0.9 L3.2,0.9 Z" fill="#f0f0f0"/></svg>
<svg class="a" style="left:47.15px;top:90.55px;" width="10.5" height="10.5" viewBox="-5.0 -5.0 10 10"><path d="M-2.6,0.6 V-2 Q-2.6,-2.8 -1.9,-2.8 V-3.2 Q-1.4,-4 -0.7,-3.2 Q-0.2,-4.4 0.6,-3.4 Q1.4,-4 1.9,-3 V-0.6 L3.2,-1.8 Q4.2,-1.6 3.6,-0.6 L1.6,3 Q0.8,4 -0.6,4 Q-2.6,4 -2.8,2 Z" fill="#f0f0f0"/><path d="M2.8,4.4 L4.4,2.8 V4.4 Z" fill="#f0f0f0"/></svg>
<svg class="a" style="left:63.15px;top:90.55px;" width="10.5" height="10.5" viewBox="-5.0 -5.0 10 10"><path d="M-4.4,-1 L0,-3.4 L4.4,-1 L0,1.4 Z" fill="#f0f0f0"/><path d="M-3.6,0.8 L0,2.8 L3.6,0.8 L3,2.2 L0,4.2 L-3,2.2 Z" fill="#f0f0f0"/><circle cx="0" cy="-1" r="1" fill="#2b2b2b"/></svg>
<svg class="a" style="left:79.35px;top:90.55px;" width="10.5" height="10.5" viewBox="-5.0 -5.0 10 10"><circle cx="-0.8" cy="-0.8" r="2.7" fill="#f0f0f0"/><path d="M1.2,1.2 L3.8,3.8" stroke="#f0f0f0" stroke-width="1.5" stroke-linecap="round"/><path d="M-2.2,-0.8 H0.6 M-0.8,-2.2 V0.6" stroke="#2b2b2b" stroke-width="0.7"/></svg>
<span id="t31" class="t " style="top:103.00px;font-size:10.5px;line-height:12.60px;color:#f0f0f0;font-weight:700;left:36.30px;transform-origin:50% 50%;transform:translateX(-50%);font-family:'Liberation Serif',serif;">T</span>
<svg class="a" style="left:47.15px;top:103.10px;" width="10.5" height="10.5" viewBox="-5.0 -5.0 10 10"><rect x="-1" y="-3.6" width="5" height="3.8" fill="#f0f0f0"/><rect x="0" y="-2.6" width="3" height="1.8" fill="#9a4fa0"/><path d="M-3.8,3.4 L-0.6,0" stroke="#f0f0f0" stroke-width="0.8"/><circle cx="-3.8" cy="3.4" r="0.7" fill="#f0f0f0"/><path d="M2.8,4.4 L4.4,2.8 V4.4 Z" fill="#f0f0f0"/></svg>
<svg class="a" style="left:63.15px;top:103.10px;" width="10.5" height="10.5" viewBox="-5.0 -5.0 10 10"><path d="M-2.4,-2.4 L2.4,2.4 M2.4,-2.4 L-2.4,2.4" stroke="#f0f0f0" stroke-width="0.7"/></svg>
<svg class="a" style="left:79.35px;top:103.10px;" width="10.5" height="10.5" viewBox="-5.0 -5.0 10 10"><path d="M-3.4,-2 L-0.8,-3.6 L1.8,-2 V1.8 L-0.8,3.4 L-3.4,1.8 Z" fill="#f0f0f0"/><path d="M-3.4,-2 L-0.8,-0.4 L1.8,-2 M-0.8,-0.4 V3.4" stroke="#2b2b2b" stroke-width="0.5" fill="none"/><path d="M3.4,-1 V3.4 M2.2,2.2 L3.4,3.6 L4.6,2.2" stroke="#f0f0f0" stroke-width="0.6" fill="none"/></svg>
<svg class="a" style="left:31.05px;top:115.65px;" width="10.5" height="10.5" viewBox="-5.0 -5.0 10 10"><path d="M-3,-3 L3,3" stroke="#f0f0f0" stroke-width="0.8"/></svg>
<svg class="a" style="left:47.15px;top:115.65px;" width="10.5" height="10.5" viewBox="-5.0 -5.0 10 10"><path d="M-3.4,-2.4 L2.4,3.4 M-2.4,-3.4 L3.4,2.4" stroke="#f0f0f0" stroke-width="0.8"/><path d="M-2.9,-2.9 L2.9,2.9" stroke="#f0f0f0" stroke-width="0.5" stroke-dasharray="0.8 0.8"/></svg>
<svg class="a" style="left:63.15px;top:115.65px;" width="10.5" height="10.5" viewBox="-5.0 -5.0 10 10"><rect x="-3.8" y="-2.8" width="7.6" height="5.6" fill="#f0f0f0"/></svg>
<svg class="a" style="left:79.35px;top:115.65px;" width="10.5" height="10.5" viewBox="-5.0 -5.0 10 10"><rect x="-3.8" y="-2.8" width="7.6" height="5.6" rx="1.7" fill="#f0f0f0"/></svg>
<svg class="a" style="left:31.05px;top:128.20px;" width="10.5" height="10.5" viewBox="-5.0 -5.0 10 10"><circle r="3.5" fill="#f0f0f0"/></svg>
<svg class="a" style="left:47.15px;top:128.20px;" width="10.5" height="10.5" viewBox="-5.0 -5.0 10 10"><ellipse rx="4" ry="2.9" fill="#f0f0f0"/></svg>
<svg class="a" style="left:63.15px;top:128.20px;" width="10.5" height="10.5" viewBox="-5.0 -5.0 10 10"><path d="M-3.8,3 L-0.2,-3.6 Q3.6,-1.6 3.6,3 Z" fill="#f0f0f0"/><path d="M-0.2,-3.6 L1.2,3" stroke="#2b2b2b" stroke-width="0.5"/><path d="M3.2,4.6 L4.8,3 V4.6 Z" fill="#f0f0f0"/></svg>
<svg class="a" style="left:79.35px;top:128.20px;" width="10.5" height="10.5" viewBox="-5.0 -5.0 10 10"><path d="M-4.2,0.6 Q-1,2.4 1.4,0 Q3.4,-2.4 1.8,-3.2 Q0.2,-3.6 0.2,-1.4 Q0.6,1.8 3.8,3.4" fill="none" stroke="#f0f0f0" stroke-width="0.7"/><circle cx="-4.2" cy="0.6" r="0.6" fill="#f0f0f0"/></svg>
<svg class="a" style="left:31.05px;top:140.75px;" width="10.5" height="10.5" viewBox="-5.0 -5.0 10 10"><path d="M-3.8,3.2 V-1.4 L-2,-3.2 L-0.4,-0.6 L1,-2.4 L3.8,0.2 V3.2 Z" fill="#f0f0f0"/></svg>
<svg class="a" style="left:47.15px;top:140.75px;" width="10.5" height="10.5" viewBox="-5.0 -5.0 10 10"><path d="M-4,-2.8 L-1,-1.2 L3.2,-3.2 L2.4,1.2 L-0.4,3.4 L-3.2,1.6 Z" fill="#f0f0f0"/><path d="M3.2,4.6 L4.8,3 V4.6 Z" fill="#f0f0f0"/></svg>
<svg class="a" style="left:63.15px;top:140.75px;" width="10.5" height="10.5" viewBox="-5.0 -5.0 10 10"><path d="M-4,-3 L-0.6,-0.8 L3.8,-3.2 L2.6,2.6 L-2.8,3.4 Z" fill="none" stroke="#f0f0f0" stroke-width="1.3" stroke-linejoin="round"/></svg>
<svg class="a" style="left:79.35px;top:140.75px;" width="10.5" height="10.5" viewBox="-5.0 -5.0 10 10"><path d="M-3.8,0 L-1.9,-3.3 H1.9 L3.8,0 L1.9,3.3 H-1.9 Z" fill="#f0f0f0"/></svg>
<svg class="a" style="left:31.05px;top:153.30px;" width="10.5" height="10.5" viewBox="-5.0 -5.0 10 10"><circle r="3.9" fill="#8a8a8a"/><path d="M-3.4,-1.8 L1.8,3.4 M-2.2,-3.2 L3.2,2.2 M-3.8,0.4 L-0.4,3.8 M-0.4,-3.8 L3.8,0.4 M-3.4,1.8 L1.8,-3.4 M-1.8,3.4 L3.4,-1.8" stroke="#4a4a4a" stroke-width="0.45"/></svg>
<svg class="a" style="left:47.15px;top:153.30px;" width="10.5" height="10.5" viewBox="-5.0 -5.0 10 10"><path d="M-4,4 L-3.2,1.6 L0.6,-2.2 L2.2,-0.6 L-1.6,3.2 Z" fill="#f0f0f0"/><path d="M0.6,-3.4 L3.4,-0.6 M1.4,-2.6 Q3,-5 4,-4 Q5,-3 2.6,-1.4" stroke="#f0f0f0" stroke-width="1" fill="#f0f0f0"/></svg>
<svg class="a" style="left:63.15px;top:153.30px;" width="10.5" height="10.5" viewBox="-5.0 -5.0 10 10"><path d="M-1,-1 L4,4" stroke="#f0f0f0" stroke-width="1.1" stroke-linecap="round"/><path d="M-2.2,-4.2 L-1.7,-2.7 L-0.2,-2.2 L-1.7,-1.7 L-2.2,-0.2 L-2.7,-1.7 L-4.2,-2.2 L-2.7,-2.7 Z" fill="#f0f0f0"/><circle cx="1.4" cy="-3.2" r="0.5" fill="#f0f0f0"/><circle cx="-3.4" cy="1.4" r="0.5" fill="#f0f0f0"/></svg>
<svg class="a" style="left:79.35px;top:153.30px;" width="10.5" height="10.5" viewBox="-5.0 -5.0 10 10"><path d="M-3.6,-4 L-3.6,2 L-2.2,0.8 L-1.2,3 L-0.2,2.5 L-1.2,0.4 L0.8,0.4 Z" fill="#f0f0f0"/><ellipse cx="2.6" cy="2" rx="1.9" ry="1.5" fill="none" stroke="#f0f0f0" stroke-width="1"/></svg>
<svg class="a" style="left:31.05px;top:165.85px;" width="10.5" height="10.5" viewBox="-5.0 -5.0 10 10"><rect x="-2.6" y="-2.6" width="6" height="6" fill="none" stroke="#f0f0f0" stroke-width="0.7"/><rect x="-0.6" y="-0.4" width="3" height="3" fill="#f0f0f0"/><path d="M-4.2,-2.6 H-1 M-2.6,-4.2 V-1 M-4.2,0 H-3.2 M-4.2,2 H-3.2 M0,-4.2 V-3.2 M2,-4.2 V-3.2" stroke="#f0f0f0" stroke-width="0.6"/></svg>
<svg class="a" style="left:47.15px;top:165.85px;" width="10.5" height="10.5" viewBox="-5.0 -5.0 10 10"><path d="M-2.6,-1.8 L2,-2.4 L1.4,2.2 L-3,2.8 Z" fill="#f0f0f0"/><path d="M-4.2,3.8 L4,-3.8 M2.2,-3.8 H4 V-2" stroke="#f0f0f0" stroke-width="0.6" fill="none"/><path d="M-4,-3.6 V-2.4 M-4.6,-3 H-3.4 M3.6,3 H4.6" stroke="#f0f0f0" stroke-width="0.5"/></svg>
<svg class="a" style="left:63.15px;top:165.85px;" width="10.5" height="10.5" viewBox="-5.0 -5.0 10 10"><circle cy="0.4" r="3.1" fill="none" stroke="#f0f0f0" stroke-width="0.7"/><path d="M0,0.4 V-2 M-1,-3.8 H1 M0,-3.8 V-2.8" stroke="#f0f0f0" stroke-width="0.7"/></svg>
<svg class="a" style="left:79.35px;top:165.85px;" width="10.5" height="10.5" viewBox="-5.0 -5.0 10 10"><path d="M-4,-2.4 L-1,0 L-4,2.4 Z M4,-2.4 L1,0 L4,2.4 Z" fill="#f0f0f0"/><path d="M0,-3.6 V3.6" stroke="#f0f0f0" stroke-width="0.6" stroke-dasharray="1.2 0.8"/></svg>
<svg class="a" style="left:31.05px;top:178.40px;" width="10.5" height="10.5" viewBox="-5.0 -5.0 10 10"><path d="M-4.2,3.8 Q-2,1.2 0.4,-1.2 L3.8,-4 Q4.4,-3.6 3.4,-2 L0.8,1 Q-1.8,3 -4.2,3.8 Z" fill="#f0f0f0"/></svg>
<svg class="a" style="left:47.15px;top:178.40px;" width="10.5" height="10.5" viewBox="-5.0 -5.0 10 10"><path d="M-3.4,-3.4 L3.4,3.4 M3.4,-3.4 L-3.4,3.4" stroke="#f0f0f0" stroke-width="0.6"/></svg>
<svg class="a" style="left:63.15px;top:178.40px;" width="10.5" height="10.5" viewBox="-5.0 -5.0 10 10"><path d="M-4.2,0.6 L4.2,-1.4" stroke="#f0f0f0" stroke-width="0.7"/><path d="M-1.4,-3.6 L2.6,3.4 M2,-3.8 L-1.6,3.2" stroke="#f0f0f0" stroke-width="0.7"/><circle cx="-2" cy="3.4" r="0.9" fill="none" stroke="#f0f0f0" stroke-width="0.6"/><circle cx="2.8" cy="3.4" r="0.9" fill="none" stroke="#f0f0f0" stroke-width="0.6"/></svg>
<svg class="a" style="left:79.35px;top:178.40px;" width="10.5" height="10.5" viewBox="-5.0 -5.0 10 10"><path d="M-3.6,-2.8 H-0.4 Q3,-2.6 3.2,1 V3.8" fill="none" stroke="#f0f0f0" stroke-width="0.7"/><path d="M-3.6,-1.6 H-0.6 Q1.8,-1.4 2,1" fill="none" stroke="#8a8a8a" stroke-width="0.5"/></svg>
<svg class="a" style="left:31.05px;top:190.95px;" width="10.5" height="10.5" viewBox="-5.0 -5.0 10 10"><path d="M-4,-3 H2.6 V3.8" fill="none" stroke="#f0f0f0" stroke-width="0.7"/><path d="M-1.4,-3 Q0,1 2.6,1.2" fill="none" stroke="#f0f0f0" stroke-width="0.6"/></svg>
<svg class="a" style="left:47.15px;top:190.95px;" width="10.5" height="10.5" viewBox="-5.0 -5.0 10 10"><path d="M-3.8,-3.4 Q3,-3.2 3.4,3.8 M-3.8,-1.4 Q1,-1.2 1.4,3.8 M-3.8,-3.4 V-1.4" fill="none" stroke="#f0f0f0" stroke-width="0.7"/></svg>
<svg class="a" style="left:63.15px;top:190.95px;" width="10.5" height="10.5" viewBox="-5.0 -5.0 10 10"><path d="M-4,0.4 L-0.6,-3 H4 V0.6 L0.6,3.6 H-4 Z" fill="#f0f0f0"/><path d="M3.2,4.6 L4.8,3 V4.6 Z" fill="#f0f0f0"/></svg>
<svg class="a" style="left:79.35px;top:190.95px;" width="10.5" height="10.5" viewBox="-5.0 -5.0 10 10"><path d="M-3.4,3 L3,-3" stroke="#f0f0f0" stroke-width="0.7"/><path d="M1.6,-4 H4 V-1.6 Z M-2,4 H-4.4 V1.6 Z" fill="#f0f0f0"/><rect x="-1.2" y="-1.2" width="2.4" height="2.4" fill="#9a9a9a" transform="rotate(45)"/></svg>
<svg class="a" style="left:31.05px;top:203.50px;" width="10.5" height="10.5" viewBox="-5.0 -5.0 10 10"><path d="M-4,-3 V3 M4,-3 V3 M-4,0 H4" stroke="#f0f0f0" stroke-width="0.7"/><path d="M-4,0 L-2.4,-1 V1 Z M4,0 L2.4,-1 V1 Z" fill="#f0f0f0"/></svg>
<svg class="a" style="left:47.15px;top:203.50px;" width="10.5" height="10.5" viewBox="-5.0 -5.0 10 10"><path d="M-3.8,3.4 L-1.6,-2.6 L3.8,0.2" fill="none" stroke="#f0f0f0" stroke-width="0.7"/><path d="M-2.6,0.4 Q0,0.8 0.8,-1.2" fill="none" stroke="#f0f0f0" stroke-width="0.6"/><circle cx="-1.6" cy="-2.6" r="0.8" fill="#f0f0f0"/></svg>
<svg class="a" style="left:63.15px;top:203.50px;" width="10.5" height="10.5" viewBox="-5.0 -5.0 10 10"><path d="M-2.6,3.4 V-3.4 Q3,-2.6 3.2,3.4 Z" fill="none" stroke="#f0f0f0" stroke-width="0.8"/></svg>
<svg class="a" style="left:79.35px;top:203.50px;" width="10.5" height="10.5" viewBox="-5.0 -5.0 10 10"><path d="M-4,-2.8 Q0,-4.6 4,-2.8 V2.8 Q0,1 -4,2.8 Z" fill="none" stroke="#f0f0f0" stroke-width="0.8"/></svg>
<svg class="a" style="left:31.05px;top:216.05px;" width="10.5" height="10.5" viewBox="-5.0 -5.0 10 10"><circle r="3.5" fill="none" stroke="#f0f0f0" stroke-width="0.8"/><path d="M-2.5,2.5 L2.5,-2.5" stroke="#f0f0f0" stroke-width="0.8"/></svg>
<svg class="a" style="left:47.15px;top:216.05px;" width="10.5" height="10.5" viewBox="-5.0 -5.0 10 10"><rect x="-0.8" y="-3" width="4.8" height="6" fill="#f0f0f0"/><rect x="0.8" y="-1" width="1.8" height="2" fill="#2b2b2b"/><path d="M-4.4,2.6 H-1" stroke="#f0f0f0" stroke-width="0.7" stroke-dasharray="1 0.7"/></svg>
<svg class="a" style="left:63.15px;top:216.05px;" width="10.5" height="10.5" viewBox="-5.0 -5.0 10 10"><path d="M-4,2.8 Q-4,-3.6 0,-3.6 Q4,-3.6 4,2.8 Z" fill="#f0f0f0"/><path d="M-2.4,1.4 Q-2.4,-2 0,-2 Q2.4,-2 2.4,1.4 Z" fill="#2b2b2b"/><rect x="-1.4" y="0" width="2.8" height="1.4" fill="#f0f0f0"/></svg>
<svg class="a" style="left:79.35px;top:216.05px;" width="10.5" height="10.5" viewBox="-5.0 -5.0 10 10"><rect x="-4" y="-3" width="8" height="6" fill="#f0f0f0"/><path d="M-4,-3 L-2.6,0 L-4,3 M4,-3 L2.6,0 L4,3" fill="#2b2b2b"/><rect x="-1.2" y="-1.2" width="2.4" height="2.4" fill="#2b2b2b"/></svg>
<svg class="a" style="left:31.05px;top:228.60px;" width="10.5" height="10.5" viewBox="-5.0 -5.0 10 10"><path d="M-3.8,-1.6 L-1.8,-3.6 L2.6,0.8 L0.6,2.8 Z" fill="#f0f0f0"/><path d="M1,1.6 L4,4.2" stroke="#b08a5a" stroke-width="2"/><path d="M-4.2,0.6 L-2.6,2.2" stroke="#c8a070" stroke-width="1.2"/></svg>
<div class="a" style="left:28.00px;top:245.00px;width:72.20px;height:8.60px;background:#1b1b1b;"></div>
<svg class="a" style="left:28.20px;top:244.30px;" width="10" height="10" viewBox="-5.0 -5.0 10 10"><path d="M-1.9,-1.9 L1.9,1.9 M1.9,-1.9 L-1.9,1.9" stroke="#f0f0f0" stroke-width="0.85"/></svg>
<span id="t32" class="t " style="top:245.14px;font-size:6.1px;line-height:7.32px;color:#f0f0f0;left:39.00px;transform-origin:0 50%;transform:scaleX(0.9371);">Tool Sets</span>
<svg class="a" style="left:88.00px;top:244.30px;" width="10" height="10" viewBox="-5.0 -5.0 10 10"><path d="M-2.4,-1.5 H2.4 M-2.4,0 H2.4 M-2.4,1.5 H2.4" stroke="#d8d8d8" stroke-width="0.75"/></svg>
<span id="t33" class="t " style="top:260.82px;font-size:5.8px;line-height:6.96px;color:#ececec;left:43.80px;transform-origin:0 50%;transform:scaleX(0.9825);">Interior Elevation...</span>
<span id="t34" class="t " style="top:272.82px;font-size:5.8px;line-height:6.96px;color:#ececec;left:43.80px;transform-origin:0 50%;transform:scaleX(1.0295);">Detail Callout</span>
<span id="t35" class="t " style="top:285.82px;font-size:5.8px;line-height:6.96px;color:#ececec;left:43.80px;transform-origin:0 50%;transform:scaleX(0.9409);">North Arrow</span>
<span id="t36" class="t " style="top:297.82px;font-size:5.8px;line-height:6.96px;color:#ececec;left:43.80px;transform-origin:0 50%;transform:scaleX(0.9406);">Elevation Benchm...</span>
<span id="t37" class="t " style="top:310.82px;font-size:5.8px;line-height:6.96px;color:#ececec;left:43.80px;transform-origin:0 50%;transform:scaleX(0.9157);">Room Name Simple</span>
<span id="t38" class="t " style="top:323.82px;font-size:5.8px;line-height:6.96px;color:#ececec;left:43.80px;transform-origin:0 50%;transform:scaleX(0.9745);">Scale Bar</span>
<svg class="a" style="left:31.05px;top:257.65px;" width="10.5" height="10.5" viewBox="-5.0 -5.0 10 10"><path d="M-4,3 H4 M-4,1.2 V3 M4,1.2 V3" stroke="#f0f0f0" stroke-width="0.7" fill="none"/><path d="M-1.2,-0.4 H1.6 V2 H-1.2 Z" fill="#f0f0f0"/><path d="M0.2,-3.6 V-1.2 M-0.8,-2.2 L0.2,-1 L1.2,-2.2" stroke="#f0f0f0" stroke-width="0.6" fill="none"/></svg>
<svg class="a" style="left:31.05px;top:270.25px;" width="10.5" height="10.5" viewBox="-5.0 -5.0 10 10"><rect x="-3.2" y="-3.4" width="6" height="6.8" rx="1" fill="none" stroke="#f0f0f0" stroke-width="0.7" stroke-dasharray="1.4 0.9"/><path d="M2.8,2 L4.4,3.8" stroke="#f0f0f0" stroke-width="0.7"/></svg>
<svg class="a" style="left:31.05px;top:282.85px;" width="10.5" height="10.5" viewBox="-5.0 -5.0 10 10"><path d="M-4,-1.6 H2 L-1,1.6 Z" fill="#f0f0f0"/><path d="M-1,1.4 V3.6" stroke="#f0f0f0" stroke-width="0.6"/></svg>
<svg class="a" style="left:31.05px;top:295.45px;" width="10.5" height="10.5" viewBox="-5.0 -5.0 10 10"><circle cx="-2" cy="-1.6" r="2" fill="none" stroke="#f0f0f0" stroke-width="0.7"/><path d="M-2,-3.6 A2,2 0 0 1 0,-1.6 H-2 Z" fill="#f0f0f0"/><path d="M-4.2,1.6 H4.4 M0.4,-1.6 H4.4 M-4.2,3.2 H1" stroke="#f0f0f0" stroke-width="0.6"/></svg>
<svg class="a" style="left:31.05px;top:308.05px;" width="10.5" height="10.5" viewBox="-5.0 -5.0 10 10"><path d="M-4,-3.4 H1 M-4,-2 H1 M-4,-0.6 H1" stroke="#f0f0f0" stroke-width="0.7"/><rect x="-2" y="0" width="6" height="3.8" fill="#f0f0f0"/><path d="M-0.6,2.8 V1.2 L1.2,2.8 V1.2" stroke="#2b2b2b" stroke-width="0.5" fill="none"/></svg>
<svg class="a" style="left:31.05px;top:320.65px;" width="10.5" height="10.5" viewBox="-5.0 -5.0 10 10"><path d="M-4.2,-1 H4.2 V1.8 H-4.2 Z" fill="none" stroke="#f0f0f0" stroke-width="0.7"/><path d="M-2.2,-1 V1.8 M-0.2,-1 V1.8 M2,-1 V1.8" stroke="#f0f0f0" stroke-width="0.6"/><rect x="-4.2" y="-1" width="2" height="2.8" fill="#f0f0f0"/><rect x="-0.2" y="-1" width="2.2" height="2.8" fill="#f0f0f0"/></svg>
<div class="a" style="left:28.00px;top:329.60px;width:72.50px;height:42.00px;background:#262626;"></div>
<div class="a" style="left:28.00px;top:329.40px;width:72.50px;height:0.50px;background:#3a3a3a;"></div>
<div class="a" style="left:77.60px;top:343.00px;width:14.00px;height:11.40px;background:#585858;border-radius:1.8px;"></div>
<svg class="a" style="left:31.05px;top:330.95px;" width="10.5" height="10.5" viewBox="-5.0 -5.0 10 10"><path d="M-4,3 L-2.6,-2.6 L-0.8,-1.6 L0.8,-3 L2.6,-1.8 L4,3 Z" fill="#c9c99a"/><path d="M-2,3 L-1,-0.6 M1,3 L0.6,-1 M-3,1 H3.4" stroke="#5a7a5a" stroke-width="0.5"/></svg>
<svg class="a" style="left:47.15px;top:330.95px;" width="10.5" height="10.5" viewBox="-5.0 -5.0 10 10"><circle r="3.7" fill="#dfe8f2"/><path d="M-2.6,-2 Q-0.6,-3 0.4,-1.6 Q-0.2,0 -1.6,0.2 Q-2.8,1.4 -1.8,2.8 M1.6,-0.2 Q3,0.2 2.6,2 Q1.6,2.4 1.2,1 Z" fill="#2f6fbf" stroke="#2f6fbf" stroke-width="0.6"/></svg>
<svg class="a" style="left:63.15px;top:330.95px;" width="10.5" height="10.5" viewBox="-5.0 -5.0 10 10"><rect x="-4" y="-3" width="8" height="6" fill="none" stroke="#f0f0f0" stroke-width="0.8"/><path d="M-0.2,-3 V3 M-4,0.4 H-0.2 M1.8,-3 V3" stroke="#f0f0f0" stroke-width="0.7"/></svg>
<svg class="a" style="left:79.35px;top:330.95px;" width="10.5" height="10.5" viewBox="-5.0 -5.0 10 10"><path d="M-3.6,3.4 V-0.6 Q-3.6,-3.4 0,-3.4 Q3.6,-3.4 3.6,-0.6 V3.4" fill="none" stroke="#e06a7a" stroke-width="0.9"/><path d="M-1.4,3.4 V0 Q0,-1.6 1.4,0 V3.4 M-3.6,0.6 H3.6" fill="none" stroke="#e06a7a" stroke-width="0.6"/></svg>
<svg class="a" style="left:31.05px;top:343.35px;" width="10.5" height="10.5" viewBox="-5.0 -5.0 10 10"><path d="M-3,-3.4 H3 L0.6,0 L3,3.4 H-3 L-0.6,0 Z" fill="#cfe0f4"/><path d="M-3,-3.4 H3 M-3,3.4 H3" stroke="#7fa8d8" stroke-width="0.8"/></svg>
<svg class="a" style="left:47.15px;top:343.35px;" width="10.5" height="10.5" viewBox="-5.0 -5.0 10 10"><rect x="-3.6" y="-1.6" width="7.2" height="5" rx="0.6" fill="#f0f0f0"/><rect x="-1.6" y="-3" width="3.2" height="1.6" fill="#f0f0f0"/><circle cy="1" r="1.6" fill="#2b2b2b"/><circle cy="1" r="0.7" fill="#f0f0f0"/><path d="M-4.4,-2.8 L-3,-1.6" stroke="#f0f0f0" stroke-width="0.6"/></svg>
<svg class="a" style="left:63.15px;top:343.35px;" width="10.5" height="10.5" viewBox="-5.0 -5.0 10 10"><rect x="-3" y="-3.6" width="6" height="7.2" fill="#e8d4b0"/><rect x="-1.6" y="-2" width="3.2" height="4.6" fill="#8a5a2a"/></svg>
<svg class="a" style="left:79.35px;top:343.35px;" width="10.5" height="10.5" viewBox="-5.0 -5.0 10 10"><rect x="-4" y="-1.6" width="8" height="3.2" fill="#e8c89a" stroke="#b98a4a" stroke-width="0.5"/></svg>
<svg class="a" style="left:31.05px;top:355.75px;" width="10.5" height="10.5" viewBox="-5.0 -5.0 10 10"><circle cx="-2.4" cy="1.6" r="1.7" fill="none" stroke="#4a9ae8" stroke-width="0.7"/><circle cx="2.6" cy="1.6" r="1.7" fill="none" stroke="#4a9ae8" stroke-width="0.7"/><path d="M-2.4,1.6 L-0.8,-1.6 H1.6 L2.6,1.6 M-0.8,-1.6 L0.4,1.6 M-1.6,-2.6 H0" stroke="#4a9ae8" stroke-width="0.7" fill="none"/></svg>
<svg class="a" style="left:47.15px;top:355.75px;" width="10.5" height="10.5" viewBox="-5.0 -5.0 10 10"><path d="M-4,-3 H4 M-4,3.2 H4 M-2.6,-3 V3.2 M2.6,-3 V3.2" stroke="#f0f0f0" stroke-width="0.7"/><rect x="-2" y="-1.2" width="4" height="2.4" fill="#f0f0f0"/></svg>
<svg class="a" style="left:63.15px;top:355.75px;" width="10.5" height="10.5" viewBox="-5.0 -5.0 10 10"><rect x="-4" y="-1.8" width="4.4" height="3.8" rx="0.8" fill="#f0f0f0"/><path d="M0.4,-0.6 H4.2 M0.4,1 H3.2" stroke="#f0f0f0" stroke-width="0.8"/></svg>
<svg class="a" style="left:79.35px;top:355.75px;" width="10.5" height="10.5" viewBox="-5.0 -5.0 10 10"><g transform="translate(-1,-0.6)"><circle r="2.08" fill="#f0f0f0"/><rect x="-0.78" y="-2.96" width="1.56" height="1.56" rx="0.16" fill="#f0f0f0" transform="rotate(0)"/><rect x="-0.78" y="-2.96" width="1.56" height="1.56" rx="0.16" fill="#f0f0f0" transform="rotate(45)"/><rect x="-0.78" y="-2.96" width="1.56" height="1.56" rx="0.16" fill="#f0f0f0" transform="rotate(90)"/><rect x="-0.78" y="-2.96" width="1.56" height="1.56" rx="0.16" fill="#f0f0f0" transform="rotate(135)"/><rect x="-0.78" y="-2.96" width="1.56" height="1.56" rx="0.16" fill="#f0f0f0" transform="rotate(180)"/><rect x="-0.78" y="-2.96" width="1.56" height="1.56" rx="0.16" fill="#f0f0f0" transform="rotate(225)"/><rect x="-0.78" y="-2.96" width="1.56" height="1.56" rx="0.16" fill="#f0f0f0" transform="rotate(270)"/><rect x="-0.78" y="-2.96" width="1.56" height="1.56" rx="0.16" fill="#f0f0f0" transform="rotate(315)"/><circle r="0.99" fill="#2b2b2b"/></g><g transform="translate(2.6,2.2)"><circle r="1.44" fill="#f0f0f0"/><rect x="-0.54" y="-2.05" width="1.08" height="1.08" rx="0.11" fill="#f0f0f0" transform="rotate(0)"/><rect x="-0.54" y="-2.05" width="1.08" height="1.08" rx="0.11" fill="#f0f0f0" transform="rotate(45)"/><rect x="-0.54" y="-2.05" width="1.08" height="1.08" rx="0.11" fill="#f0f0f0" transform="rotate(90)"/><rect x="-0.54" y="-2.05" width="1.08" height="1.08" rx="0.11" fill="#f0f0f0" transform="rotate(135)"/><rect x="-0.54" y="-2.05" width="1.08" height="1.08" rx="0.11" fill="#f0f0f0" transform="rotate(180)"/><rect x="-0.54" y="-2.05" width="1.08" height="1.08" rx="0.11" fill="#f0f0f0" transform="rotate(225)"/><rect x="-0.54" y="-2.05" width="1.08" height="1.08" rx="0.11" fill="#f0f0f0" transform="rotate(270)"/><rect x="-0.54" y="-2.05" width="1.08" height="1.08" rx="0.11" fill="#f0f0f0" transform="rotate(315)"/><circle r="0.68" fill="#2b2b2b"/></g></svg>
<div class="a" style="left:28.00px;top:371.00px;width:72.20px;height:8.60px;background:#1b1b1b;"></div>
<svg class="a" style="left:28.20px;top:370.30px;" width="10" height="10" viewBox="-5.0 -5.0 10 10"><path d="M-1.9,-1.9 L1.9,1.9 M1.9,-1.9 L-1.9,1.9" stroke="#f0f0f0" stroke-width="0.85"/></svg>
<span id="t39" class="t " style="top:371.14px;font-size:6.1px;line-height:7.32px;color:#f0f0f0;left:39.00px;transform-origin:0 50%;transform:scaleX(0.9903);">Attributes</span>
<svg class="a" style="left:79.70px;top:370.30px;" width="10" height="10" viewBox="-5.0 -5.0 10 10"><path d="M-2.4,-1.5 H2.4 M-2.4,0 H2.4 M-2.4,1.5 H2.4" stroke="#d8d8d8" stroke-width="0.75"/></svg>
<span id="t40" class="t " style="top:370.96px;font-size:6.4px;line-height:7.68px;color:#e0e0e0;font-weight:700;left:92.90px;transform-origin:50% 50%;transform:translateX(-50%);">?</span>
<span id="t41" class="t " style="top:383.94px;font-size:5.6px;line-height:6.72px;color:#d4d4d4;left:30.60px;transform-origin:0 50%;transform:scaleX(1.0061);">Fill</span>
<div class="a" style="left:41.00px;top:386.60px;width:57.00px;height:0.50px;background:#333;"></div>
<div class="a" style="left:30.20px;top:394.80px;width:67.40px;height:10.40px;background:#4b4b4b;border-radius:2px;border:0.5px solid #5c5c5c;"></div>
<div class="a" style="left:34.00px;top:396.80px;width:6.40px;height:6.40px;background:#e9e9e9;border-radius:0.8px;"></div>
<span id="t42" class="t " style="top:396.76px;font-size:5.9px;line-height:7.08px;color:#f0f0f0;left:67.00px;transform-origin:50% 50%;transform:translateX(-50%) scaleX(1.0298);">Solid</span>
<div class="a" style="left:90.60px;top:395.30px;width:0.50px;height:9.40px;background:#333;"></div>
<svg class="a" style="left:89.20px;top:395.30px;" width="10" height="10" viewBox="-5.0 -5.0 10 10"><path d="M-1.4,-0.7 L0,0.7 L1.4,-0.7" fill="none" stroke="#e8e8e8" stroke-width="0.8" stroke-linecap="round" stroke-linejoin="round"/></svg>
<div class="a" style="left:30.20px;top:408.00px;width:67.40px;height:10.40px;background:#ffffff;border-radius:1.2px;"></div>
<div class="a" style="left:30.20px;top:421.40px;width:60.40px;height:10.20px;border-radius:1.5px;background:linear-gradient(90deg,#bdbdbd 0,#8e8e8e 4%,#6c6c6c 12%,#666 100%);border:0.5px solid #777;"></div>
<span id="t43" class="t " style="top:423.82px;font-size:5.8px;line-height:6.96px;color:#f0f0f0;left:89.40px;transform-origin:100% 50%;transform:translateX(-100%) scaleX(0.9442);">100%</span>
<div class="a" style="left:91.40px;top:421.40px;width:6.20px;height:10.20px;background:#4b4b4b;border-radius:1.5px;border:0.5px solid #5c5c5c;"></div>
<svg class="a" style="left:89.50px;top:421.50px;" width="10" height="10" viewBox="-5.0 -5.0 10 10"><circle cy="-1.8" r="0.5" fill="#eee"/><circle cy="0" r="0.5" fill="#eee"/><circle cy="1.8" r="0.5" fill="#eee"/></svg>
<span id="t44" class="t " style="top:435.94px;font-size:5.6px;line-height:6.72px;color:#d4d4d4;left:30.60px;transform-origin:0 50%;transform:scaleX(0.8440);">Pen</span>
<div class="a" style="left:42.00px;top:439.30px;width:56.00px;height:0.50px;background:#333;"></div>
<div class="a" style="left:30.20px;top:447.50px;width:67.40px;height:10.40px;background:#4b4b4b;border-radius:2px;border:0.5px solid #5c5c5c;"></div>
<div class="a" style="left:34.00px;top:449.50px;width:6.40px;height:6.40px;background:#e9e9e9;border-radius:0.8px;"></div>
<span id="t45" class="t " style="top:449.76px;font-size:5.9px;line-height:7.08px;color:#f0f0f0;left:67.00px;transform-origin:50% 50%;transform:translateX(-50%) scaleX(1.0298);">Solid</span>
<div class="a" style="left:90.60px;top:448.00px;width:0.50px;height:9.40px;background:#333;"></div>
<svg class="a" style="left:89.20px;top:448.00px;" width="10" height="10" viewBox="-5.0 -5.0 10 10"><path d="M-1.4,-0.7 L0,0.7 L1.4,-0.7" fill="none" stroke="#e8e8e8" stroke-width="0.8" stroke-linecap="round" stroke-linejoin="round"/></svg>
<div class="a" style="left:30.20px;top:460.40px;width:67.40px;height:10.40px;background:#000000;border-radius:1.2px;border:0.5px solid #3c3c3c;"></div>
<div class="a" style="left:30.20px;top:474.00px;width:60.40px;height:9.80px;background:#363636;border-radius:1.5px;border:0.5px solid #414141;"></div>
<span id="t46" class="t " style="top:475.82px;font-size:5.8px;line-height:6.96px;color:#2b2b2b;left:89.40px;transform-origin:100% 50%;transform:translateX(-100%) scaleX(0.9442);">100%</span>
<div class="a" style="left:91.40px;top:474.00px;width:6.20px;height:9.80px;background:#2f2f2f;border-radius:1.5px;border:0.5px solid #3c3c3c;"></div>
<div class="a" style="left:30.20px;top:486.60px;width:67.40px;height:9.80px;background:#4b4b4b;border-radius:2px;border:0.5px solid #5c5c5c;"></div>
<div class="a" style="left:33.00px;top:491.30px;width:43.00px;height:0.50px;background:#a0a0a0;"></div>
<span id="t47" class="t " style="top:488.82px;font-size:5.8px;line-height:6.96px;color:#f0f0f0;left:89.40px;transform-origin:100% 50%;transform:translateX(-100%) scaleX(1.0622);">0.05</span>
<div class="a" style="left:90.60px;top:487.10px;width:0.50px;height:8.80px;background:#333;"></div>
<svg class="a" style="left:89.20px;top:486.90px;" width="10" height="10" viewBox="-5.0 -5.0 10 10"><path d="M-1.4,-0.7 L0,0.7 L1.4,-0.7" fill="none" stroke="#e8e8e8" stroke-width="0.8" stroke-linecap="round" stroke-linejoin="round"/></svg>
<div class="a" style="left:30.20px;top:499.60px;width:29.00px;height:10.00px;background:#323232;border-radius:2px;border:0.5px solid #3c3c3c;"></div>
<div class="a" style="left:68.60px;top:499.60px;width:29.00px;height:10.00px;background:#323232;border-radius:2px;border:0.5px solid #3c3c3c;"></div>
<div class="a" style="left:33.00px;top:504.50px;width:18.00px;height:0.50px;background:#444;"></div>
<div class="a" style="left:71.00px;top:504.50px;width:18.00px;height:0.50px;background:#444;"></div>
<svg class="a" style="left:50.60px;top:499.90px;" width="10" height="10" viewBox="-5.0 -5.0 10 10"><path d="M-1.2,-0.6 L0,0.6 L1.2,-0.6" fill="none" stroke="#454545" stroke-width="0.7" stroke-linecap="round" stroke-linejoin="round"/></svg>
<svg class="a" style="left:89.00px;top:499.90px;" width="10" height="10" viewBox="-5.0 -5.0 10 10"><path d="M-1.2,-0.6 L0,0.6 L1.2,-0.6" fill="none" stroke="#454545" stroke-width="0.7" stroke-linecap="round" stroke-linejoin="round"/></svg>
<svg class="a" style="left:58.60px;top:499.20px;" width="11" height="11" viewBox="-5.0 -5.0 10 10"><ellipse cx="0" cy="-1.9" rx="1.5" ry="1.9" fill="none" stroke="#e8e8e8" stroke-width="0.8"/><ellipse cx="0.3" cy="1.9" rx="1.5" ry="1.9" fill="none" stroke="#e8e8e8" stroke-width="0.8"/><path d="M-1.2,-0.6 L1.4,0.8" stroke="#e8e8e8" stroke-width="0.8"/></svg>
<span id="t48" class="t " style="top:514.82px;font-size:5.8px;line-height:6.96px;color:#d8d8d8;font-weight:700;left:30.60px;transform-origin:0 50%;transform:scaleX(0.9564);">Effects</span>
<div class="a" style="left:51.00px;top:517.90px;width:47.00px;height:0.50px;background:#333;"></div>
<div class="a" style="left:32.30px;top:526.90px;width:6.00px;height:6.00px;background:#5a5a5a;border-radius:1.2px;"></div>
<span id="t49" class="t " style="top:526.76px;font-size:5.9px;line-height:7.08px;color:#ececec;left:40.40px;transform-origin:0 50%;transform:scaleX(0.9673);">Shadow</span>
<div class="a" style="left:79.50px;top:525.60px;width:10.30px;height:10.40px;background:#000;"></div>
<div class="a" style="left:91.40px;top:525.60px;width:6.20px;height:10.40px;background:#4b4b4b;border-radius:1.5px;border:0.5px solid #5c5c5c;"></div>
<svg class="a" style="left:89.50px;top:525.80px;" width="10" height="10" viewBox="-5.0 -5.0 10 10"><circle cy="-1.8" r="0.5" fill="#eee"/><circle cy="0" r="0.5" fill="#eee"/><circle cy="1.8" r="0.5" fill="#eee"/></svg>
<div class="a" style="left:103.00px;top:81.00px;width:765.50px;height:13.80px;background:#151515;"></div>
<div class="a" style="left:104.40px;top:83.00px;width:117.80px;height:11.80px;background:#2d2d2d;border-radius:2.5px 2.5px 0 0;"></div>
<svg class="a" style="left:106.80px;top:84.00px;" width="10" height="10" viewBox="-5.0 -5.0 10 10"><path d="M-1.9,-1.9 L1.9,1.9 M1.9,-1.9 L-1.9,1.9" stroke="#e8e8e8" stroke-width="0.75"/></svg>
<span id="t50" class="t " style="top:85.42px;font-size:7.3px;line-height:8.76px;color:#ececec;left:116.90px;transform-origin:0 50%;transform:scaleX(0.9747);">Layers as Floors.vwx</span>
<span id="t51" class="t " style="top:85.60px;font-size:7px;line-height:8.40px;color:#e0e0e0;left:227.60px;transform-origin:50% 50%;transform:translateX(-50%);">+</span>
<svg class="a" style="left:0;top:0;" width="1024" height="588" viewBox="0 0 1024 588" font-family="Liberation Sans, sans-serif"><defs><linearGradient id="sky" x1="0" y1="0" x2="0" y2="1"><stop offset="0" stop-color="#494949"/><stop offset="1" stop-color="#565656"/></linearGradient><linearGradient id="gnd" x1="0" y1="0" x2="0" y2="1"><stop offset="0" stop-color="#262626"/><stop offset="0.5" stop-color="#2f2f2f"/><stop offset="1" stop-color="#393939"/></linearGradient><linearGradient id="rf1" x1="0" y1="0" x2="1" y2="0"><stop offset="0" stop-color="#8f8f8f"/><stop offset="1" stop-color="#a6a6a6"/></linearGradient><linearGradient id="rf2" x1="0" y1="0" x2="1" y2="0"><stop offset="0" stop-color="#c9c9c9"/><stop offset="1" stop-color="#a9a9a9"/></linearGradient><linearGradient id="rf3" x1="0" y1="1" x2="1" y2="0"><stop offset="0" stop-color="#cfcfcf"/><stop offset="1" stop-color="#a2a2a2"/></linearGradient></defs><rect x="103" y="94.6" width="765.5" height="163.6" fill="url(#sky)"/><rect x="103" y="258.2" width="765.5" height="279.8" fill="url(#gnd)"/><polygon points="339.2,387.4 414.8,369.8 457.4,385.0 504.5,371.7 646.8,414.4 520.8,495.2" fill="#e5e5e5" /><polygon points="339.2,387.4 520.8,495.2 520.8,507.0 339.2,392.8" fill="#f6f6f6" /><polygon points="520.8,495.2 646.8,414.4 646.8,423.1 520.8,507.0" fill="url(#rf3)" /><line x1="339.2" y1="387.4" x2="520.8" y2="495.2" stroke="#9a9a9a" stroke-width="0.4" /><line x1="333.3" y1="305.4" x2="339.2" y2="387.4" stroke="#d8952f" stroke-width="0.6" stroke-dasharray="5.4 8.1"/><line x1="412.3" y1="322.0" x2="414.8" y2="369.8" stroke="#d8952f" stroke-width="0.6" stroke-dasharray="5.4 8.1"/><line x1="456.5" y1="330.0" x2="457.4" y2="385.0" stroke="#d8952f" stroke-width="0.6" stroke-dasharray="5.4 8.1"/><line x1="504.4" y1="339.0" x2="504.5" y2="371.7" stroke="#d8952f" stroke-width="0.6" stroke-dasharray="5.4 8.1"/><line x1="655.4" y1="315.2" x2="646.8" y2="414.4" stroke="#d8952f" stroke-width="0.6" stroke-dasharray="5.4 8.1"/><line x1="327.0" y1="195.8" x2="333.2" y2="296.5" stroke="#d8952f" stroke-width="0.6" stroke-dasharray="5.4 8.1"/><line x1="410.5" y1="204.6" x2="411.9" y2="292.1" stroke="#d8952f" stroke-width="0.6" stroke-dasharray="5.4 8.1"/><line x1="454.8" y1="196.8" x2="456.3" y2="296.6" stroke="#d8952f" stroke-width="0.6" stroke-dasharray="5.4 8.1"/><line x1="505.0" y1="203.2" x2="504.4" y2="292.7" stroke="#d8952f" stroke-width="0.6" stroke-dasharray="5.4 8.1"/><line x1="663.8" y1="181.7" x2="655.4" y2="305.4" stroke="#d8952f" stroke-width="0.6" stroke-dasharray="5.4 8.1"/><polygon points="333.2,296.5 412.2,291.8 456.3,296.8 504.6,292.4 655.4,305.4 523.2,331.8" fill="#e7e7e7" stroke="#d8952f" stroke-width="0.8" stroke-linejoin="round" /><polygon points="333.2,296.5 523.2,331.8 523.2,345.8 333.2,305.4" fill="#f7f7f7" stroke="#d8952f" stroke-width="0.8" stroke-linejoin="round" /><polygon points="523.2,331.8 655.4,305.4 655.4,315.1 523.2,345.8" fill="url(#rf2)" stroke="#d8952f" stroke-width="0.8" stroke-linejoin="round" /><polygon points="327.0,195.8 526.5,137.1 663.8,181.7 505.0,203.2 454.8,196.8 410.5,204.6" fill="#6b6b6b" /><polygon points="327.0,188.4 526.5,121.1 526.5,137.1 327.0,195.8" fill="#f4f4f4" /><polygon points="526.5,121.1 663.8,172.3 663.8,181.7 526.5,137.1" fill="url(#rf1)" /><line x1="526.5" y1="137.1" x2="663.8" y2="181.7" stroke="#555" stroke-width="0.4" /><line x1="274.0" y1="182.0" x2="327.0" y2="188.4" stroke="#37807d" stroke-width="0.45" /><line x1="284.0" y1="300.6" x2="333.2" y2="297.4" stroke="#37807d" stroke-width="0.45" /><line x1="292.0" y1="398.0" x2="339.2" y2="387.4" stroke="#37807d" stroke-width="0.45" /><g transform="translate(267.8,181.4) rotate(6)"><line x1="-11.9" y1="0" x2="11.9" y2="0" stroke="#bfb49e" stroke-width="0.45"/><line x1="0" y1="-10.4" x2="0" y2="10.4" stroke="#bfb49e" stroke-width="0.45"/><circle r="6.4" fill="#fbfbfb"/><path d="M0,0 L0,-6.4 A6.4,6.4 0 0 1 6.4,0 Z M0,0 L0,6.4 A6.4,6.4 0 0 1 -6.4,0 Z" fill="#3fbcb9"/></g><g transform="translate(277.9,300.7) rotate(-3)"><line x1="-11.6" y1="0" x2="11.6" y2="0" stroke="#bfb49e" stroke-width="0.45"/><line x1="0" y1="-10.1" x2="0" y2="10.1" stroke="#bfb49e" stroke-width="0.45"/><circle r="6.1" fill="#fbfbfb"/><path d="M0,0 L0,-6.1 A6.1,6.1 0 0 1 6.1,0 Z M0,0 L0,6.1 A6.1,6.1 0 0 1 -6.1,0 Z" fill="#3fbcb9"/></g><g transform="translate(286.1,399.2) rotate(-12)"><line x1="-11.5" y1="0" x2="11.5" y2="0" stroke="#bfb49e" stroke-width="0.45"/><line x1="0" y1="-10.0" x2="0" y2="10.0" stroke="#bfb49e" stroke-width="0.45"/><circle r="6.0" fill="#fbfbfb"/><path d="M0,0 L0,-6.0 A6.0,6.0 0 0 1 6.0,0 Z M0,0 L0,6.0 A6.0,6.0 0 0 1 -6.0,0 Z" fill="#3fbcb9"/></g><text x="257.0" y="177.7" font-size="9.4" fill="#f4f4f4" stroke="#f4f4f4" stroke-width="0.22" text-anchor="end" transform="rotate(6.6 257.0 177.7)" textLength="65.2" lengthAdjust="spacingAndGlyphs">Second Floor</text><text x="257.0" y="187.9" font-size="8.2" fill="#f4f4f4" stroke="#f4f4f4" stroke-width="0.22" text-anchor="end" transform="rotate(6.3 257.0 187.9)" textLength="20" lengthAdjust="spacingAndGlyphs">9'-6"</text><text x="266.8" y="300.7" font-size="8.8" fill="#f4f4f4" stroke="#f4f4f4" stroke-width="0.22" text-anchor="end" transform="rotate(-2.9 266.8 300.7)" textLength="46.5" lengthAdjust="spacingAndGlyphs">Main Floor</text><text x="266.9" y="310.0" font-size="7.8" fill="#f4f4f4" stroke="#f4f4f4" stroke-width="0.22" text-anchor="end" transform="rotate(-2.9 266.9 310.0)" textLength="8" lengthAdjust="spacingAndGlyphs">0"</text><text x="276.3" y="401.3" font-size="8.4" fill="#f4f4f4" stroke="#f4f4f4" stroke-width="0.22" text-anchor="end" transform="rotate(-10.5 276.3 401.3)" textLength="51.5" lengthAdjust="spacingAndGlyphs">Lower Floor</text><text x="276.6" y="410.8" font-size="7.6" fill="#f4f4f4" stroke="#f4f4f4" stroke-width="0.22" text-anchor="end" transform="rotate(-10.5 276.6 410.8)" textLength="21.5" lengthAdjust="spacingAndGlyphs">-8'-6"</text><g><line x1="117" y1="516.6" x2="148" y2="512.6" stroke="#4aa84a" stroke-width="0.7"/><text x="146.4" y="514.6" font-size="3.6" fill="#4fb04f" font-weight="700">Y</text><polygon points="119.9,491.5 124.7,484.0 137.0,481.2 150.5,481.2 159.2,483.3 163.6,491.0 163.6,508.7 158.1,516.1 146.5,517.0 137.1,516.1 125.5,514.6 119.9,508.7" fill="#8fb6dc" stroke="#b4d4f0" stroke-width="0.6" stroke-linejoin="round"/><polygon points="124.7,484.0 137.0,481.2 150.5,481.2 159.2,483.3 146.5,486.6 136.5,486.6" fill="#8aa3ba" stroke="#b9d6ef" stroke-width="0.5"/><polygon points="124.7,484.0 136.5,486.6 141.3,494.3 141.3,512.0 137.1,516.1 125.5,514.6 119.9,508.7 119.9,491.5" fill="#6b8298" stroke="#a9cbe8" stroke-width="0.5" stroke-linejoin="round"/><polygon points="141.3,494.3 146.5,486.6 159.2,483.3 163.6,491.0 163.6,508.7 158.1,516.1 146.5,517.0 141.3,512.0" fill="#6e869d" stroke="#a9cbe8" stroke-width="0.5" stroke-linejoin="round"/><g transform="translate(130.7,501) rotate(9)"><rect x="-6" y="-2.5" width="12" height="5" rx="2.2" fill="#fff"/><text x="0" y="1.5" font-size="4.2" font-weight="700" fill="#2a3fa8" text-anchor="middle">Front</text></g><g transform="translate(152.4,501) rotate(-9)"><rect x="-6" y="-2.5" width="12" height="5" rx="2.2" fill="#fff"/><text x="0" y="1.5" font-size="4.2" font-weight="700" fill="#2a3fa8" text-anchor="middle">Right</text></g><g transform="translate(143.5,483.6)"><rect x="-5.5" y="-1.4" width="11" height="2.8" rx="1.2" fill="#e8eef5" opacity="0.85"/><text x="0" y="0.9" font-size="2.6" font-weight="700" fill="#5a6fa8" text-anchor="middle">Top</text></g><line x1="117" y1="474.4" x2="117" y2="516.6" stroke="#1f2f92" stroke-width="2"/><line x1="116.4" y1="516.6" x2="142.8" y2="520.9" stroke="#c4482c" stroke-width="0.9"/><text x="144" y="523.6" font-size="4" fill="#d04a2e" font-weight="700">X</text></g></svg>
<div class="a" style="left:868.50px;top:81.00px;width:3.00px;height:457.00px;background:#1c1c1c;"></div>
<div class="a" style="left:871.30px;top:81.00px;width:124.70px;height:457.00px;background:#2b2b2b;"></div>
<div class="a" style="left:871.30px;top:80.90px;width:124.70px;height:9.00px;background:#1b1b1b;"></div>
<svg class="a" style="left:871.50px;top:80.40px;" width="10" height="10" viewBox="-5.0 -5.0 10 10"><path d="M-1.9,-1.9 L1.9,1.9 M1.9,-1.9 L-1.9,1.9" stroke="#f0f0f0" stroke-width="0.85"/></svg>
<span id="t52" class="t " style="top:81.14px;font-size:6.1px;line-height:7.32px;color:#f0f0f0;left:882.30px;transform-origin:0 50%;transform:scaleX(0.9711);">Object Info - Shape</span>
<svg class="a" style="left:975.50px;top:80.40px;" width="10" height="10" viewBox="-5.0 -5.0 10 10"><path d="M-2.4,-1.5 H2.4 M-2.4,0 H2.4 M-2.4,1.5 H2.4" stroke="#d8d8d8" stroke-width="0.75"/></svg>
<span id="t53" class="t " style="top:81.96px;font-size:6.4px;line-height:7.68px;color:#e0e0e0;font-weight:700;left:988.70px;transform-origin:50% 50%;transform:translateX(-50%);">?</span>
<div class="a" style="left:871.30px;top:89.90px;width:124.70px;height:14.20px;background:#1b1b1b;"></div>
<div class="a" style="left:871.70px;top:90.40px;width:16.00px;height:13.70px;background:#333333;border-radius:2px 2px 0 0;"></div>
<svg class="a" style="left:874.70px;top:92.10px;" width="11" height="11" viewBox="-5.0 -5.0 10 10"><rect x="-1.4" y="-3.2" width="5" height="4.6" rx="0.8" fill="#f0f0f0"/><circle cx="-1.6" cy="1.4" r="2.5" fill="#f0f0f0" stroke="#333" stroke-width="0.7"/></svg>
<svg class="a" style="left:888.40px;top:92.10px;" width="11" height="11" viewBox="-5.0 -5.0 10 10"><path d="M-4,-3 H4 V2.2 H2.6 V3.8 H1.4 V2.2 H-1.4 V3.8 H-2.6 V2.2 H-4 Z" fill="#f0f0f0"/><rect x="-2.2" y="-1.4" width="4.4" height="2" fill="#1b1b1b"/></svg>
<svg class="a" style="left:902.10px;top:91.90px;" width="11" height="11" viewBox="-5.0 -5.0 10 10"><path d="M-2.6,-1.6 Q0,-3 2.6,-1.6 Q4,0.8 2.4,3.2 H-2.4 Q-4,0.8 -2.6,-1.6 Z" fill="#f0f0f0"/><rect x="-0.8" y="-3.4" width="1.6" height="1.2" fill="#f0f0f0"/><path d="M2.8,-0.8 Q5,-1 4.8,-2.4" stroke="#f0f0f0" stroke-width="0.9" fill="none"/><path d="M-3,-0.4 Q-5.2,-0.6 -4.6,1.2 Q-4,2 -3,1.8" stroke="#f0f0f0" stroke-width="0.8" fill="none"/></svg>
<div class="a" style="left:887.20px;top:92.00px;width:0.50px;height:11.00px;background:#3a3a3a;"></div>
<div class="a" style="left:900.80px;top:92.00px;width:0.50px;height:11.00px;background:#3a3a3a;"></div>
<div class="a" style="left:914.60px;top:92.00px;width:0.50px;height:11.00px;background:#3a3a3a;"></div>
<span id="t54" class="t " style="top:107.76px;font-size:5.9px;line-height:7.08px;color:#ececec;font-weight:700;left:873.60px;transform-origin:0 50%;transform:scaleX(0.9797);">Slab</span>
<div class="a" style="left:871.30px;top:115.20px;width:124.70px;height:0.50px;background:#3a3a3a;"></div>
<span id="t55" class="t " style="top:120.88px;font-size:5.7px;line-height:6.84px;color:#d6d6d6;left:875.50px;transform-origin:0 50%;transform:scaleX(0.9802);">Class:</span>
<div class="a" style="left:895.20px;top:119.60px;width:96.60px;height:7.80px;background:#606060;border-radius:2px;"></div>
<svg class="a" style="left:982.80px;top:118.50px;" width="10" height="10" viewBox="-5.0 -5.0 10 10"><path d="M-1.3,-0.65 L0,0.65 L1.3,-0.65" fill="none" stroke="#d0d0d0" stroke-width="0.7" stroke-linecap="round" stroke-linejoin="round"/></svg>
<span id="t56" class="t " style="top:120.76px;font-size:5.9px;line-height:7.08px;color:#f0f0f0;left:898.20px;transform-origin:0 50%;transform:scaleX(0.8940);">None</span>
<span id="t57" class="t " style="top:132.88px;font-size:5.7px;line-height:6.84px;color:#d6d6d6;left:875.50px;transform-origin:0 50%;transform:scaleX(0.9992);">Layer:</span>
<div class="a" style="left:895.20px;top:132.10px;width:96.60px;height:7.80px;background:#606060;border-radius:2px;"></div>
<svg class="a" style="left:982.80px;top:131.00px;" width="10" height="10" viewBox="-5.0 -5.0 10 10"><path d="M-1.3,-0.65 L0,0.65 L1.3,-0.65" fill="none" stroke="#d0d0d0" stroke-width="0.7" stroke-linecap="round" stroke-linejoin="round"/></svg>
<span id="t58" class="t " style="top:132.76px;font-size:5.9px;line-height:7.08px;color:#f0f0f0;left:898.20px;transform-origin:0 50%;transform:scaleX(0.9631);">Main Floor</span>
<div class="a" style="left:874.30px;top:143.80px;width:117.70px;height:38.80px;background:#272727;border-radius:2px;border:0.5px solid #444;"></div>
<div class="a" style="left:879.00px;top:149.30px;width:16.00px;height:12.00px;background:#575757;border-radius:2px;"></div>
<svg class="a" style="left:881.50px;top:149.80px;" width="11" height="11" viewBox="-5.0 -5.0 10 10"><path d="M-4,2 L-3.2,-1.8 H3.2 L4,2 Z" fill="#2b4f88" stroke="#6aa2ee" stroke-width="0.6" stroke-linejoin="round"/><path d="M0,-1.8 V2 M-3.6,0.2 H3.6" stroke="#6aa2ee" stroke-width="0.45"/></svg>
<svg class="a" style="left:881.50px;top:163.70px;" width="11" height="11" viewBox="-5.0 -5.0 10 10"><rect x="-3.6" y="-3.6" width="7.2" height="7.2" fill="#6d2f72" stroke="#e08ae4" stroke-width="0.7"/><path d="M0,-3.6 V3.6 M-3.6,0 H3.6" stroke="#e08ae4" stroke-width="0.6"/></svg>
<span id="t59" class="t " style="top:148.88px;font-size:5.7px;line-height:6.84px;color:#d6d6d6;left:903.60px;">X:</span>
<div class="a" style="left:912.00px;top:147.90px;width:77.40px;height:8.40px;background:#2c2c2c;border-radius:1px;border:0.5px solid #3a3a3a;"></div>
<span id="t60" class="t " style="top:148.82px;font-size:5.8px;line-height:6.96px;color:#ececec;left:914.40px;transform-origin:0 50%;transform:scaleX(0.9993);">-11'6 1/2"</span>
<span id="t61" class="t " style="top:160.88px;font-size:5.7px;line-height:6.84px;color:#d6d6d6;left:903.60px;">Y:</span>
<div class="a" style="left:912.00px;top:159.60px;width:77.40px;height:8.40px;background:#2c2c2c;border-radius:1px;border:0.5px solid #3a3a3a;"></div>
<span id="t62" class="t " style="top:160.82px;font-size:5.8px;line-height:6.96px;color:#ececec;left:914.40px;transform-origin:0 50%;transform:scaleX(1.0180);">-3'1 1/2"</span>
<span id="t63" class="t " style="top:172.88px;font-size:5.7px;line-height:6.84px;color:#d6d6d6;left:903.60px;">Z:</span>
<div class="a" style="left:912.00px;top:171.30px;width:77.40px;height:8.40px;background:#2c2c2c;border-radius:1px;border:0.5px solid #3a3a3a;"></div>
<span id="t64" class="t " style="top:172.82px;font-size:5.8px;line-height:6.96px;color:#ececec;left:914.40px;transform-origin:0 50%;transform:scaleX(0.9817);">0"</span>
<span id="t65" class="t " style="top:186.88px;font-size:5.7px;line-height:6.84px;color:#d6d6d6;left:875.50px;transform-origin:0 50%;transform:scaleX(1.0065);">Z Ref:</span>
<div class="a" style="left:906.00px;top:186.40px;width:85.80px;height:7.80px;background:#606060;border-radius:2px;"></div>
<div class="a" style="left:984.60px;top:186.40px;width:7.20px;height:7.80px;background:#2f6bd5;border-radius:1.8px;"></div>
<svg class="a" style="left:983.20px;top:185.30px;" width="10" height="10" viewBox="-5.0 -5.0 10 10"><path d="M-1.2,-0.7 L0,-1.9 L1.2,-0.7 M-1.2,0.7 L0,1.9 L1.2,0.7" fill="none" stroke="#fff" stroke-width="0.7" stroke-linecap="round" stroke-linejoin="round"/></svg>
<span id="t66" class="t " style="top:186.76px;font-size:5.9px;line-height:7.08px;color:#f0f0f0;left:909.00px;transform-origin:0 50%;transform:scaleX(0.9727);">Layer Elevation</span>
<span id="t67" class="t " style="top:199.88px;font-size:5.7px;line-height:6.84px;color:#d6d6d6;left:875.50px;transform-origin:0 50%;transform:scaleX(1.0336);">Z Off:</span>
<div class="a" style="left:906.00px;top:199.20px;width:85.80px;height:8.40px;background:#252525;border-radius:1px;border:0.5px solid #363636;"></div>
<span id="t68" class="t " style="top:199.82px;font-size:5.8px;line-height:6.96px;color:#ececec;left:908.40px;transform-origin:0 50%;transform:scaleX(0.9817);">0"</span>
<span id="t69" class="t " style="top:212.88px;font-size:5.7px;line-height:6.84px;color:#d6d6d6;left:875.50px;transform-origin:0 50%;transform:scaleX(0.9835);">Style:</span>
<div class="a" style="left:906.00px;top:212.30px;width:85.80px;height:7.80px;background:#606060;border-radius:2px;"></div>
<div class="a" style="left:984.60px;top:212.30px;width:7.20px;height:7.80px;background:#2f6bd5;border-radius:1.8px;"></div>
<svg class="a" style="left:983.20px;top:211.20px;" width="10" height="10" viewBox="-5.0 -5.0 10 10"><path d="M-1.2,-0.7 L0,-1.9 L1.2,-0.7 M-1.2,0.7 L0,1.9 L1.2,0.7" fill="none" stroke="#fff" stroke-width="0.7" stroke-linecap="round" stroke-linejoin="round"/></svg>
<span id="t70" class="t " style="top:212.76px;font-size:5.9px;line-height:7.08px;color:#f0f0f0;left:909.00px;transform-origin:0 50%;transform:scaleX(0.9860);">Unstyled</span>
<span id="t71" class="t " style="top:226.88px;font-size:5.7px;line-height:6.84px;color:#d6d6d6;left:875.50px;transform-origin:0 50%;transform:scaleX(0.9990);">Bounding:</span>
<div class="a" style="left:905.40px;top:225.90px;width:86.40px;height:7.80px;background:#606060;border-radius:2px;"></div>
<div class="a" style="left:984.60px;top:225.90px;width:7.20px;height:7.80px;background:#2f6bd5;border-radius:1.8px;"></div>
<svg class="a" style="left:983.20px;top:224.80px;" width="10" height="10" viewBox="-5.0 -5.0 10 10"><path d="M-1.2,-0.7 L0,-1.9 L1.2,-0.7 M-1.2,0.7 L0,1.9 L1.2,0.7" fill="none" stroke="#fff" stroke-width="0.7" stroke-linecap="round" stroke-linejoin="round"/></svg>
<span id="t72" class="t " style="top:226.76px;font-size:5.9px;line-height:7.08px;color:#f0f0f0;left:908.40px;transform-origin:0 50%;transform:scaleX(0.9520);">Manual</span>
<div class="a" style="left:873.80px;top:238.30px;width:119.20px;height:7.60px;background:#5d5d5d;border-radius:2px;"></div>
<span id="t73" class="t " style="top:238.82px;font-size:5.8px;line-height:6.96px;color:#ececec;left:933.40px;transform-origin:50% 50%;transform:translateX(-50%) scaleX(1.0211);">Components...</span>
<div class="a" style="left:873.80px;top:249.00px;width:119.20px;height:7.60px;background:#5d5d5d;border-radius:2px;"></div>
<span id="t74" class="t " style="top:249.82px;font-size:5.8px;line-height:6.96px;color:#ececec;left:933.40px;transform-origin:50% 50%;transform:translateX(-50%) scaleX(1.0144);">Edge Offsets...</span>
<span id="t75" class="t " style="top:258.88px;font-size:5.7px;line-height:6.84px;color:#d6d6d6;left:875.50px;transform-origin:0 50%;transform:scaleX(1.0282);">Thick:</span>
<span id="t76" class="t " style="top:258.82px;font-size:5.8px;line-height:6.96px;color:#ececec;left:906.80px;transform-origin:0 50%;transform:scaleX(1.0195);">8"</span>
<div class="a" style="left:873.80px;top:269.00px;width:119.20px;height:7.60px;background:#5d5d5d;border-radius:2px;"></div>
<span id="t77" class="t " style="top:269.82px;font-size:5.8px;line-height:6.96px;color:#ececec;left:933.40px;transform-origin:50% 50%;transform:translateX(-50%) scaleX(0.9902);">Slab Data...</span>
<span id="t78" class="t " style="top:280.76px;font-size:5.9px;line-height:7.08px;color:#ececec;font-weight:700;left:875.50px;transform-origin:0 50%;transform:scaleX(0.9500);">Energos</span>
<div class="a" style="left:875.00px;top:291.00px;width:6.00px;height:6.00px;background:#5a5a5a;border-radius:1.2px;"></div>
<span id="t79" class="t " style="top:290.82px;font-size:5.8px;line-height:6.96px;color:#ececec;left:883.00px;transform-origin:0 50%;transform:scaleX(1.0226);">Include in calculations</span>
<div class="a" style="left:874.00px;top:305.00px;width:119.00px;height:0.50px;background:#363636;"></div>
<div class="a" style="left:871.30px;top:320.00px;width:124.70px;height:0.50px;background:#383838;"></div>
<span id="t80" class="t " style="top:309.88px;font-size:5.7px;line-height:6.84px;color:#d6d6d6;left:875.50px;transform-origin:0 50%;transform:scaleX(0.9993);">Area:</span>
<span id="t81" class="t " style="top:309.82px;font-size:5.8px;line-height:6.96px;color:#ececec;left:906.80px;transform-origin:0 50%;transform:scaleX(1.0186);">27.064 sq m</span>
<span id="t82" class="t " style="top:322.88px;font-size:5.7px;line-height:6.84px;color:#d6d6d6;left:872.60px;transform-origin:0 50%;transform:scaleX(0.9901);">Name:</span>
<div class="a" style="left:891.60px;top:321.90px;width:101.60px;height:8.40px;background:#252525;border-radius:1px;border:0.5px solid #363636;"></div>
<div class="a" style="left:871.30px;top:334.60px;width:124.70px;height:9.00px;background:#1b1b1b;"></div>
<svg class="a" style="left:871.50px;top:334.10px;" width="10" height="10" viewBox="-5.0 -5.0 10 10"><path d="M-1.9,-1.9 L1.9,1.9 M1.9,-1.9 L-1.9,1.9" stroke="#f0f0f0" stroke-width="0.85"/></svg>
<span id="t83" class="t " style="top:335.14px;font-size:6.1px;line-height:7.32px;color:#f0f0f0;left:882.30px;transform-origin:0 50%;transform:scaleX(0.9772);">Navigation - Design Layers</span>
<svg class="a" style="left:975.50px;top:334.10px;" width="10" height="10" viewBox="-5.0 -5.0 10 10"><path d="M-2.4,-1.5 H2.4 M-2.4,0 H2.4 M-2.4,1.5 H2.4" stroke="#d8d8d8" stroke-width="0.75"/></svg>
<span id="t84" class="t " style="top:334.96px;font-size:6.4px;line-height:7.68px;color:#e0e0e0;font-weight:700;left:988.70px;transform-origin:50% 50%;transform:translateX(-50%);">?</span>
<div class="a" style="left:871.30px;top:343.40px;width:124.70px;height:13.20px;background:#1b1b1b;"></div>
<div class="a" style="left:887.40px;top:344.00px;width:13.40px;height:12.60px;background:#333333;border-radius:2px 2px 0 0;"></div>
<div class="a" style="left:887.20px;top:345.50px;width:0.50px;height:10.00px;background:#3a3a3a;"></div>
<div class="a" style="left:900.80px;top:345.50px;width:0.50px;height:10.00px;background:#3a3a3a;"></div>
<div class="a" style="left:914.40px;top:345.50px;width:0.50px;height:10.00px;background:#3a3a3a;"></div>
<div class="a" style="left:928.00px;top:345.50px;width:0.50px;height:10.00px;background:#3a3a3a;"></div>
<div class="a" style="left:941.80px;top:345.50px;width:0.50px;height:10.00px;background:#3a3a3a;"></div>
<div class="a" style="left:955.60px;top:345.50px;width:0.50px;height:10.00px;background:#3a3a3a;"></div>
<svg class="a" style="left:874.95px;top:345.35px;" width="10.5" height="10.5" viewBox="-5.0 -5.0 10 10"><circle cx="-3" cy="0.6" r="0.9" fill="#f0f0f0"/><circle cx="0" cy="-2.2" r="1.1" fill="#f0f0f0"/><circle cx="0.4" cy="1" r="1.1" fill="#f0f0f0"/><circle cx="3" cy="3" r="1" fill="#f0f0f0"/><circle cx="-0.6" cy="3.4" r="0.8" fill="#f0f0f0"/></svg>
<svg class="a" style="left:888.65px;top:345.35px;" width="10.5" height="10.5" viewBox="-5.0 -5.0 10 10"><path d="M-4,-1.6 L0,-3.6 L4,-1.6 L0,0.4 Z" fill="#f0f0f0"/><path d="M-4,0.2 L0,2.2 L4,0.2 M-4,2 L0,4 L4,2" fill="none" stroke="#f0f0f0" stroke-width="0.8"/></svg>
<svg class="a" style="left:902.15px;top:345.35px;" width="10.5" height="10.5" viewBox="-5.0 -5.0 10 10"><rect x="-3.8" y="-3" width="7.6" height="6" fill="none" stroke="#f0f0f0" stroke-width="1"/></svg>
<svg class="a" style="left:916.15px;top:345.35px;" width="10.5" height="10.5" viewBox="-5.0 -5.0 10 10"><rect x="-2.8" y="-1.8" width="5.6" height="5.2" fill="#f0f0f0"/><path d="M-4.2,-2 V-3.6 H-2.4 M4.2,-2 V-3.6 H2.4" fill="none" stroke="#f0f0f0" stroke-width="0.7"/><circle cy="-0.4" r="1" fill="#2b2b2b"/><path d="M-1.8,3 Q0,0.4 1.8,3" fill="#2b2b2b"/></svg>
<svg class="a" style="left:929.75px;top:345.35px;" width="10.5" height="10.5" viewBox="-5.0 -5.0 10 10"><path d="M-3.6,-4 H0.4 L2.6,-1.8 V0 H-0.4 V4 H-3.6 Z" fill="#f0f0f0"/><ellipse cx="1.8" cy="2.3" rx="3" ry="2" fill="#f0f0f0" stroke="#1b1b1b" stroke-width="0.5"/><circle cx="1.8" cy="2.3" r="0.9" fill="#1b1b1b"/></svg>
<svg class="a" style="left:943.45px;top:345.35px;" width="10.5" height="10.5" viewBox="-5.0 -5.0 10 10"><path d="M-3.6,-3 H2 L3.8,-1.2 V3.8 H-3.6 Z" fill="#f0f0f0"/><path d="M-2,-1.4 L0,-2.4 L2,-1.4 L0,-0.4 Z M-2,0.4 L0,1.4 L2,0.4 M-2,1.8 L0,2.8 L2,1.8" fill="none" stroke="#2b2b2b" stroke-width="0.6"/></svg>
<span id="t85" class="t " style="top:360.88px;font-size:5.7px;line-height:6.84px;color:#d6d6d6;left:873.00px;transform-origin:0 50%;transform:scaleX(1.0432);">Layer Options:</span>
<div class="a" style="left:913.40px;top:359.70px;width:81.20px;height:7.80px;background:#606060;border-radius:2px;"></div>
<div class="a" style="left:987.40px;top:359.70px;width:7.20px;height:7.80px;background:#2f6bd5;border-radius:1.8px;"></div>
<svg class="a" style="left:986.00px;top:358.60px;" width="10" height="10" viewBox="-5.0 -5.0 10 10"><path d="M-1.2,-0.7 L0,-1.9 L1.2,-0.7 M-1.2,0.7 L0,1.9 L1.2,0.7" fill="none" stroke="#fff" stroke-width="0.7" stroke-linecap="round" stroke-linejoin="round"/></svg>
<span id="t86" class="t " style="top:360.76px;font-size:5.9px;line-height:7.08px;color:#f0f0f0;left:916.00px;transform-origin:0 50%;transform:scaleX(0.9936);">Show/Snap/Modify Others</span>
<span id="t87" class="t " style="top:369.88px;font-size:5.7px;line-height:6.84px;color:#d6d6d6;left:873.00px;transform-origin:0 50%;transform:scaleX(1.0127);">Filter:</span>
<div class="a" style="left:913.40px;top:368.70px;width:81.20px;height:7.80px;background:#606060;border-radius:2px;"></div>
<div class="a" style="left:987.40px;top:368.70px;width:7.20px;height:7.80px;background:#2f6bd5;border-radius:1.8px;"></div>
<svg class="a" style="left:986.00px;top:367.60px;" width="10" height="10" viewBox="-5.0 -5.0 10 10"><path d="M-1.2,-0.7 L0,-1.9 L1.2,-0.7 M-1.2,0.7 L0,1.9 L1.2,0.7" fill="none" stroke="#fff" stroke-width="0.7" stroke-linecap="round" stroke-linejoin="round"/></svg>
<span id="t88" class="t " style="top:369.76px;font-size:5.9px;line-height:7.08px;color:#f0f0f0;left:916.00px;transform-origin:0 50%;transform:scaleX(0.9771);">&lt;All Layers&gt;</span>
<div class="a" style="left:873.40px;top:378.20px;width:121.00px;height:8.60px;background:#363636;border-radius:2px;"></div>
<svg class="a" style="left:874.60px;top:377.40px;" width="10" height="10" viewBox="-5.0 -5.0 10 10"><circle cx="-0.5" cy="-0.5" r="1.7" fill="none" stroke="#b8b8b8" stroke-width="0.7"/><path d="M0.8,0.8 L2.4,2.4" stroke="#b8b8b8" stroke-width="0.8"/></svg>
<span id="t89" class="t " style="top:379.88px;font-size:5.7px;line-height:6.84px;color:#6f6f6f;left:885.60px;transform-origin:0 50%;transform:scaleX(1.0204);">Search</span>
<div class="a" style="left:871.30px;top:390.00px;width:124.70px;height:148.00px;background:#1d1d1d;"></div>
<div class="a" style="left:871.30px;top:390.00px;width:124.70px;height:11.00px;background:#1d1d1d;"></div>
<div class="a" style="left:871.30px;top:401.00px;width:124.70px;height:0.50px;background:#3a3a3a;"></div>
<div class="a" style="left:871.30px;top:390.00px;width:124.70px;height:0.50px;background:#3a3a3a;"></div>
<div class="a" style="left:894.60px;top:390.50px;width:0.50px;height:10.50px;background:#3c3c3c;"></div>
<div class="a" style="left:906.40px;top:390.50px;width:0.50px;height:10.50px;background:#3c3c3c;"></div>
<div class="a" style="left:973.80px;top:390.50px;width:0.50px;height:10.50px;background:#3c3c3c;"></div>
<div class="a" style="left:986.40px;top:390.50px;width:0.50px;height:10.50px;background:#3c3c3c;"></div>
<div class="a" style="left:872.90px;top:401.50px;width:0.50px;height:136.50px;background:#303030;"></div>
<div class="a" style="left:879.30px;top:401.50px;width:0.50px;height:136.50px;background:#303030;"></div>
<div class="a" style="left:886.00px;top:401.50px;width:0.50px;height:136.50px;background:#303030;"></div>
<div class="a" style="left:894.40px;top:401.50px;width:0.50px;height:136.50px;background:#303030;"></div>
<span id="t90" class="t " style="top:392.88px;font-size:5.7px;line-height:6.84px;color:#e8e8e8;left:873.40px;transform-origin:0 50%;transform:scaleX(1.0018);">Visib...</span>
<span id="t91" class="t " style="top:392.88px;font-size:5.7px;line-height:6.84px;color:#e8e8e8;left:910.80px;transform-origin:0 50%;transform:scaleX(1.0146);">Design Layer Name</span>
<span id="t92" class="t " style="top:392.88px;font-size:5.7px;line-height:6.84px;color:#e8e8e8;left:977.60px;">#</span>
<span id="t93" class="t " style="top:392.88px;font-size:5.7px;line-height:6.84px;color:#e8e8e8;left:988.70px;">St</span>
<div class="a" style="left:871.30px;top:419.20px;width:124.70px;height:7.70px;background:#3c5d8f;"></div>
<svg class="a" style="left:871.70px;top:402.20px;" width="9" height="9" viewBox="-4.5 -4.5 9 9"><path d="M-4,0 Q0,-4.4 4,0 Q0,4.4 -4,0 Z" fill="#ffffff"/><circle r="1.45" fill="#1d1d1d"/><circle cx="0.4" cy="-0.4" r="0.5" fill="#ffffff"/></svg>
<span id="t94" class="t " style="top:403.88px;font-size:5.7px;line-height:6.84px;color:#f2f2f2;left:910.00px;transform-origin:0 50%;transform:scaleX(0.9488);">Roof</span>
<span id="t95" class="t " style="top:403.88px;font-size:5.7px;line-height:6.84px;color:#f2f2f2;left:977.00px;">1</span>
<svg class="a" style="left:871.70px;top:410.30px;" width="9" height="9" viewBox="-4.5 -4.5 9 9"><path d="M-4,0 Q0,-4.4 4,0 Q0,4.4 -4,0 Z" fill="#ffffff"/><circle r="1.45" fill="#1d1d1d"/><circle cx="0.4" cy="-0.4" r="0.5" fill="#ffffff"/></svg>
<span id="t96" class="t " style="top:411.88px;font-size:5.7px;line-height:6.84px;color:#f2f2f2;left:910.00px;transform-origin:0 50%;transform:scaleX(1.0169);">Second Floor</span>
<span id="t97" class="t " style="top:411.88px;font-size:5.7px;line-height:6.84px;color:#f2f2f2;left:977.00px;">2</span>
<svg class="a" style="left:871.70px;top:418.40px;" width="9" height="9" viewBox="-4.5 -4.5 9 9"><path d="M-4,0 Q0,-4.4 4,0 Q0,4.4 -4,0 Z" fill="#ffffff"/><circle r="1.45" fill="#1d1d1d"/><circle cx="0.4" cy="-0.4" r="0.5" fill="#ffffff"/></svg>
<span id="t98" class="t " style="top:419.88px;font-size:5.7px;line-height:6.84px;color:#f2f2f2;font-weight:700;left:910.00px;transform-origin:0 50%;transform:scaleX(1.0081);">Main Floor</span>
<span id="t99" class="t " style="top:419.88px;font-size:5.7px;line-height:6.84px;color:#f2f2f2;left:977.00px;">3</span>
<svg class="a" style="left:871.70px;top:426.50px;" width="9" height="9" viewBox="-4.5 -4.5 9 9"><path d="M-4,0 Q0,-4.4 4,0 Q0,4.4 -4,0 Z" fill="#ffffff"/><circle r="1.45" fill="#1d1d1d"/><circle cx="0.4" cy="-0.4" r="0.5" fill="#ffffff"/></svg>
<span id="t100" class="t " style="top:427.88px;font-size:5.7px;line-height:6.84px;color:#f2f2f2;left:910.00px;transform-origin:0 50%;transform:scaleX(1.0323);">Lower Floor</span>
<span id="t101" class="t " style="top:427.88px;font-size:5.7px;line-height:6.84px;color:#f2f2f2;left:977.00px;">4</span>
<svg class="a" style="left:896.20px;top:417.80px;" width="10" height="10" viewBox="-5.0 -5.0 10 10"><path d="M-3,0.4 L-1.2,2.4 L3.2,-2.6" fill="none" stroke="#f2f2f2" stroke-width="0.7"/></svg>
<div class="a" style="left:28.00px;top:538.00px;width:968.00px;height:12.50px;background:#2a2a2a;"></div>
<span id="t102" class="t " style="top:541.08px;font-size:6.2px;line-height:7.44px;color:#e0e0e0;left:32.00px;transform-origin:0 50%;transform:scaleX(0.9500);">Selection Tool</span>
<span id="t103" class="t " style="top:541.08px;font-size:6.2px;line-height:7.44px;color:#e0e0e0;font-weight:700;left:73.50px;">X</span>
<span id="t104" class="t " style="top:541.08px;font-size:6.2px;line-height:7.44px;color:#e0e0e0;left:81.50px;transform-origin:0 50%;transform:scaleX(0.9387);">Rectangular Marquee Mode</span>
<span id="t105" class="t " style="top:541.70px;font-size:6.0px;line-height:7.20px;color:#e0e0e0;left:749.00px;transform-origin:0 50%;transform:scaleX(0.9791);">X: 22'0 1/2"</span>
<span id="t106" class="t " style="top:541.70px;font-size:6.0px;line-height:7.20px;color:#e0e0e0;left:831.00px;transform-origin:0 50%;transform:scaleX(0.9732);">Y: 15'8 1/2"</span>
<span id="t107" class="t " style="top:541.70px;font-size:6.0px;line-height:7.20px;color:#e0e0e0;left:912.40px;transform-origin:0 50%;transform:scaleX(1.0266);">Z: 0"</span>
</div></div>
</div>
</body></html>
